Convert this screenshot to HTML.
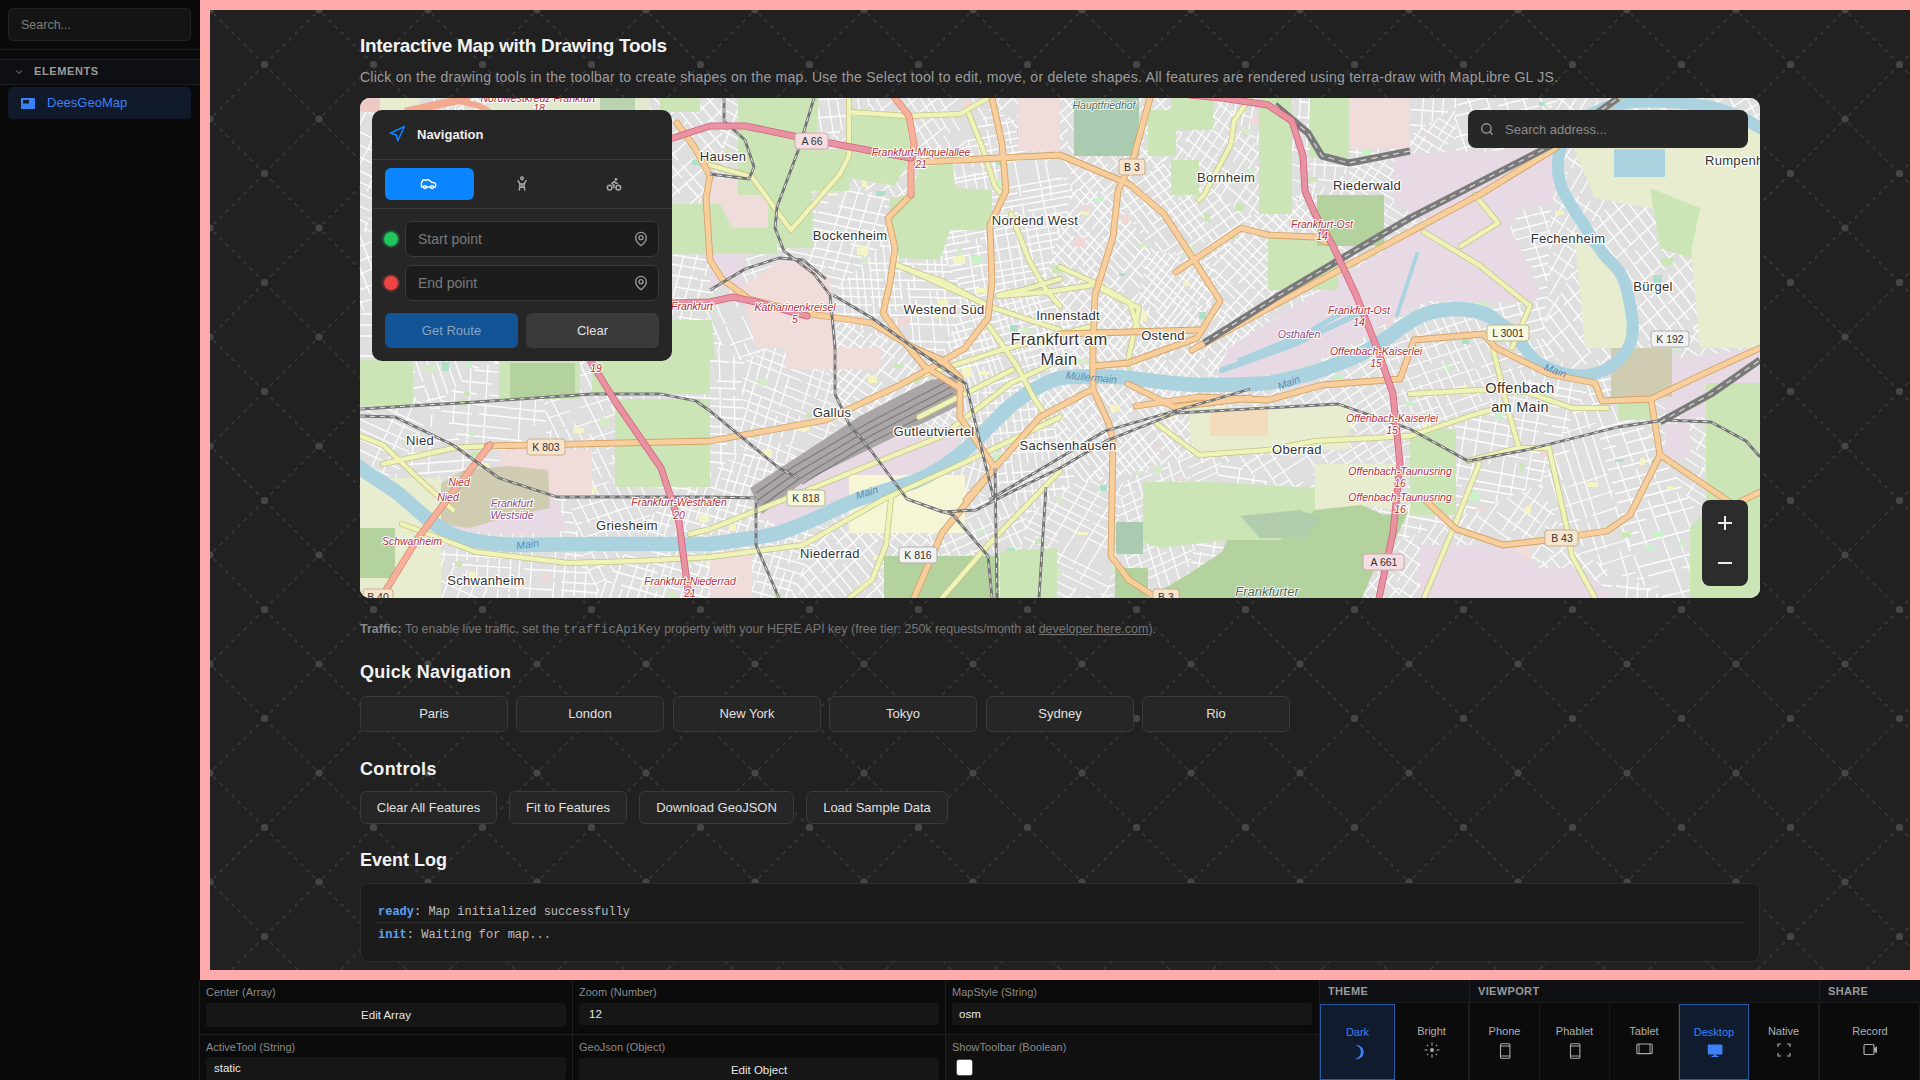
<!DOCTYPE html>
<html><head><meta charset="utf-8">
<style>
*{box-sizing:border-box;margin:0;padding:0}
html,body{width:1920px;height:1080px;overflow:hidden;background:#0a0a0a;font-family:"Liberation Sans",sans-serif}
.abs{position:absolute}
#sidebar{position:absolute;left:0;top:0;width:200px;height:1080px;background:#0a0a0a}
#sbsearch{position:absolute;left:8px;top:8px;width:183px;height:33px;border:1px solid #232323;border-radius:5px;background:#141414;color:#7d7d7d;font-size:12.5px;padding-left:12px;line-height:33px}
#sbline1{position:absolute;left:0;top:49px;width:200px;height:1px;background:#1c1c1c}
#sbhead{position:absolute;left:0;top:59px;width:200px;height:26px;background:#0e0f12;border-top:1px solid #1c1c1c;border-bottom:1px solid #1c1c1c}
#sbhead span{position:absolute;left:34px;top:5px;font-size:11px;font-weight:bold;letter-spacing:0.6px;color:#9a9a9a}
#sbitem{position:absolute;left:8px;top:87px;width:183px;height:32px;border-radius:5px;background:#111a2b}
#sbitem span{position:absolute;left:39px;top:8px;font-size:13px;color:#3b82f6}
#frame{position:absolute;left:200px;top:0;width:1720px;height:980px;background:#ffabab}
#stage{position:absolute;left:210px;top:10px;width:1700px;height:960px;background:#212121;overflow:hidden}
#bgsvg{position:absolute;left:0;top:0}
.h{position:absolute;left:360px;color:#f2f2f2;font-weight:bold;white-space:nowrap}
.qbtn{position:absolute;top:696px;height:36px;width:148px;border:1px solid #3a3a3a;border-radius:6px;background:#262626;color:#e0e0e0;font-size:13px;text-align:center;line-height:34px}
.cbtn{position:absolute;top:791px;height:33px;border:1px solid #3a3a3a;border-radius:6px;background:#262626;color:#e0e0e0;font-size:13px;text-align:center;line-height:31px}
#log{position:absolute;left:360px;top:883px;width:1400px;height:79px;border:1px solid #2c2c2c;border-radius:8px;background:#1b1b1b}
.logl{position:absolute;left:17px;font-family:"Liberation Mono",monospace;font-size:12px;color:#bdbdbd;white-space:nowrap}
.logl b{color:#5aa2f5}
#bottom{position:absolute;left:200px;top:980px;width:1720px;height:100px;background:#0b0b0b}
.cell{position:absolute;height:50px}
.lbl{position:absolute;left:6px;font-size:11px;color:#8a8a8a;white-space:nowrap}
.inp{position:absolute;left:6px;right:7px;height:24px;background:#161616;border-radius:3px;color:#e6e6e6;font-size:11.5px;line-height:24px}
.vbtn{position:absolute;top:24px;height:76px;color:#b0b0b0;font-size:11px;border-right:1px solid #1a1a1a;background:#0b0b0b}
.vbtn span{position:absolute;left:0;right:0;top:21px;text-align:center}
.vbtn.sel{background:#111b2e;border:1px solid #2a5ba6;color:#3b82f6}
.sechead{position:absolute;top:984px;font-size:11px;font-weight:bold;letter-spacing:0.35px;color:#9a9a9a}
</style></head>
<body>
<div id="sidebar">
  <div id="sbsearch">Search...</div>
  <div id="sbline1"></div>
  <div id="sbhead"><svg class="abs" style="left:14px;top:8px" width="10" height="8" viewBox="0 0 10 8"><path d="M2 2.5 L5 5.5 L8 2.5" fill="none" stroke="#555" stroke-width="1.2"/></svg><span>ELEMENTS</span></div>
  <div id="sbitem"><svg class="abs" style="left:13px;top:11px" width="14" height="11" viewBox="0 0 14 11"><rect x="0" y="0" width="14" height="11" rx="1" fill="#3b82f6"/><rect x="2" y="2" width="6" height="3.5" fill="#111a2b"/></svg><span>DeesGeoMap</span></div>
</div>
<div id="frame"></div>
<div id="stage">
  <svg id="bgsvg" width="1700" height="960">
    <defs>
      <pattern id="pt" x="0" y="0" width="109" height="109" patternUnits="userSpaceOnUse">
        <g stroke="#3d3d3d" stroke-width="1.3" stroke-dasharray="4 4.5" fill="none">
          <path d="M54.5 54.5 L0 0"/><path d="M54.5 54.5 L109 0"/><path d="M54.5 54.5 L0 109"/><path d="M54.5 54.5 L109 109"/>
        </g>
        <g fill="#464646"><circle cx="54.5" cy="54.5" r="3.6"/><circle cx="0" cy="0" r="3.6"/><circle cx="109" cy="0" r="3.6"/><circle cx="0" cy="109" r="3.6"/><circle cx="109" cy="109" r="3.6"/></g>
      </pattern>
    </defs>
    <rect width="1700" height="960" fill="url(#pt)"/>
  </svg>
</div>

<div class="h" style="top:36px;font-size:19px;line-height:19px;letter-spacing:-0.28px">Interactive Map with Drawing Tools</div>
<div class="abs" style="left:360px;top:70px;font-size:14px;line-height:14px;color:#9c9c9c;white-space:nowrap;letter-spacing:0.26px">Click on the drawing tools in the toolbar to create shapes on the map. Use the Select tool to edit, move, or delete shapes. All features are rendered using terra-draw with MapLibre GL JS.</div>

<div id="map" class="abs" style="left:360px;top:98px;width:1400px;height:500px;border-radius:10px;overflow:hidden;background:#e4e2df">
  <!--MAP--><svg width="1400" height="500" viewBox="0 0 1400 500" style="position:absolute;left:0;top:0;font-family:'Liberation Sans',sans-serif">
<rect width="1400" height="500" fill="#e0dfdf"/>
<path d="M405 12L466 46M470 48L474 50M361 -2L402 21M410 26L478 63M361 10L425 45M431 48L473 72M473 72L481 77M420 54L476 85M362 32L395 50M402 53L466 89M363 44L430 82M437 86L454 95M363 55L395 73M364 67L432 105M403 99L421 109M378 98L408 115M480 70L474 86M473 44L457 85M454 91L453 95M457 34L440 79M437 86L430 106M442 28L421 84M421 84L410 114M427 21L414 55M411 63L392 112M412 15L385 86M382 92L380 100M397 8L375 65M371 76L367 87M382 1L363 50M366 -5L361 8M955 84L952 99M948 60L940 103M938 22L926 85M932 3L921 60M921 62L919 76M924 -5L914 48M914 52L911 66M907 -5L902 22M901 25L897 47M896 -5L888 36M888 -5L881 28M878 -5L874 18M869 -5L867 8M861 -5L860 0M948 102L936 98M956 89L920 77M951 72L904 57M947 56L908 43M900 41L889 37M942 37L912 27M907 25L871 13M867 -2L857 -5M933 5L903 -5M741 94L766 119M730 93L790 155M719 91L754 127M758 132L785 159M785 159L788 162M712 94L730 113M732 115L776 161M782 167L786 171M742 138L783 180M706 113L764 173M770 179L780 190M704 120L759 177M701 129L729 158M730 159L764 194M771 201L776 206M699 137L738 178M745 185L773 215M696 146L717 167M719 169L739 190M746 197L769 221M694 154L729 189M734 195L764 226M692 161L716 186M722 192L753 224M753 224L760 232M689 171L737 220M741 225L755 239M720 215L739 234M745 241L750 245M691 193L743 247M771 218L746 247M778 196L737 245M758 205L726 243M790 155L732 224M729 227L720 238M787 146L736 207M729 215L715 231M743 184L710 223M776 130L737 176M736 177L704 214M771 123L743 157M736 165L714 190M711 194L700 207M766 117L723 168M718 174L696 200M761 110L707 174M756 103L732 131M729 134L709 158M750 95L717 134M714 138L690 166M738 93L717 119M712 125L697 142M730 93L702 125M718 91L710 101M110 269L111 274M90 249L102 283M76 235L96 289M63 224L88 296M55 230L69 269M72 276L81 303M46 236L63 284M65 290L70 304M26 266L35 290M20 278L24 289M86 298L66 303M65 288L37 294M55 274L19 281M91 250L27 264M80 238L35 248M50 233L34 237M65 217L30 225M67 203L29 212M70 181L13 193M65 159L17 169M42 151L19 156M28 229L18 190M47 235L34 187M59 227L39 156M67 206L55 161M53 157L52 153M94 6L99 7M85 14L97 15M75 23L94 25M64 32L91 35M55 40L89 43M46 48L86 53M96 5L93 29M83 16L77 61M55 40L53 55M654 496L634 505M655 488L620 503M657 477L622 492M619 494L599 503M659 468L596 496M660 459L614 480M607 483L592 489M662 449L623 466M612 471L589 482M665 431L589 465M667 420L592 453M590 454L578 460M663 412L635 424M631 426L578 450M619 415L567 438M643 396L574 427M569 429L564 432M609 402L563 423M567 413L556 417M601 505L582 464M579 458L559 414M612 505L601 481M598 476L581 439M577 431L569 412M622 505L608 475M608 474L585 425M585 425L578 410M635 505L611 452M646 505L609 424M654 496L618 419M614 411L610 402M640 444L620 400M660 461L644 426M641 421L630 397M662 447L638 395M666 430L654 404M195 83L194 88M184 78L181 96M175 73L169 103M163 67L156 108M153 62L143 119M144 57L138 91M130 69L120 129M116 80L111 112M143 119L110 112M168 103L112 92M189 91L123 78M860 368L883 371M858 377L907 384M855 386L899 392M909 394L933 397M851 397L924 407M933 408L964 413M849 405L876 409M885 410L954 420M963 421L969 422M845 416L904 424M911 425L960 432M843 424L884 430M893 431L953 440M839 436L885 442M896 444L944 451M836 446L891 454M899 455L936 460M833 455L878 461M917 466L929 468M831 464L864 469M865 469L921 477M827 475L856 479M861 479L913 487M822 493L860 498M860 498L898 503M818 504L824 505M970 415L969 422M957 409L952 441M943 402L939 429M939 434L934 461M931 396L925 434M925 435L918 480M908 463L903 498M906 383L898 439M890 494L888 505M894 377L884 442M882 452L875 505M880 370L873 420M867 461L861 499M860 415L851 469M850 478L846 505M847 411L842 446M841 454L833 505M858 202L855 205M856 193L846 206M854 180L836 206M853 171L825 209M849 165L830 191M828 195L816 210M842 163L808 210M836 162L799 212M827 160L795 202M790 209L787 214M820 158L777 215M813 156L775 207M806 155L787 180M799 153L786 171M777 215L774 212M785 214L776 205M799 212L779 194M808 211L781 186M820 209L784 176M829 208L786 169M839 207L789 160M851 206L813 171M809 168L791 151M857 201L828 174M820 166L808 155M855 187L827 161M853 173L843 164M1405 12L1385 25M1405 1L1370 23M1368 24L1362 28M1394 -5L1357 19M1371 -5L1337 17M1351 -5L1326 11M1332 -5L1315 6M1312 -5L1303 1M1306 2L1302 -5M1328 12L1319 -5M1349 22L1335 -5M1369 27L1353 -5M1383 25L1367 -5M1399 23L1384 -5M1405 -1L1403 -5M1199 198L1185 222M1268 61L1232 123M1230 127L1190 197M1261 49L1235 94M1230 103L1209 141M1206 145L1188 178M1255 36L1221 95M1219 98L1197 138M1193 144L1189 151M1249 26L1208 97M1208 98L1190 129M1243 14L1211 70M1206 78L1191 104M1238 3L1203 64M1199 71L1193 82M1230 -5L1214 22M1219 -5L1195 36M1207 -5L1196 13M1195 206L1187 200M1208 182L1188 168M1214 170L1193 155M1221 158L1190 136M1227 145L1206 130M1204 128L1191 119M1235 131L1192 100M1241 120L1192 85M1208 76L1193 66M1255 93L1230 76M1223 70L1194 50M1261 82L1221 54M1217 51L1195 35M1268 69L1213 30M1209 27L1196 17M1259 44L1208 8M1208 7L1197 -1M203 81L195 83M205 70L184 78M205 57L179 67M205 47L157 64M205 37L176 47M167 51L146 58M205 26L145 48M205 15L166 29M157 33L146 37M204 3L167 16M157 20L147 23M196 -5L161 8M159 9L148 12M167 -5L150 1M154 62L146 41M175 73L152 19M152 18L149 9M197 85L181 46M179 41L160 -5M205 60L189 22M188 19L178 -5M205 20L194 -5M481 383L469 423M474 373L462 411M444 469L441 477M448 430L438 462M434 473L424 505M461 361L451 391M451 394L441 425M440 427L428 466M425 474L417 498M427 439L410 491M407 501L406 505M445 360L421 434M419 442L408 474M408 475L399 505M435 359L422 399M422 401L409 442M407 445L397 480M395 483L388 505M428 358L403 438M402 440L385 494M384 496L382 505M417 358L392 439M390 442L370 505M410 357L384 442M381 451L366 496M366 496L363 505M401 357L376 437M374 444L364 476M361 485L354 505M394 356L374 418M373 421L361 457M359 466L346 505M385 356L363 425M360 433L352 460M351 464L338 505M376 357L351 437M347 447L335 487M332 497L329 505M363 366L355 390M353 395L336 451M333 459L319 505M351 375L336 422M340 382L322 439M322 439L301 505M330 389L318 429M318 429L308 459M307 461L299 486M297 493L293 505M316 399L295 467M294 469L283 505M307 406L292 454M290 461L276 505M294 415L283 449M280 460L265 505M262 491L257 505M264 457L248 505M246 483L239 505M254 505L238 500M325 505L261 487M253 485L246 483M366 505L326 494M321 492L253 473M402 505L371 496M360 493L303 477M298 475L259 464M428 503L385 491M382 490L343 479M337 477L264 457M433 493L396 483M391 481L333 465M327 463L284 451M281 450L271 447M437 486L391 473M388 472L329 455M326 454L275 440M441 476L413 468M408 467L380 459M375 458L305 438M303 437L282 431M446 467L400 454M393 452L316 430M310 428L288 422M451 458L378 437M367 434L335 425M335 425L296 414M456 448L396 431M387 428L309 406M460 440L407 425M404 424L355 410M351 409L316 399M465 431L413 416M409 415L376 406M336 394L327 392M418 408L391 401M385 399L336 385M474 412L418 396M410 394L361 380M478 404L448 395M443 394L384 377M374 374L358 370M483 395L397 370M390 369L368 362M482 383L406 362M405 362L383 356M473 371L430 359M283 276L285 280M254 240L280 292M281 294L286 305M245 248L268 294M269 296L288 333M238 254L264 307M267 313L289 356M228 262L249 303M251 307L267 339M267 340L290 385M221 268L243 313M278 383L291 409M212 276L248 348M252 357L286 425M230 336L252 381M254 384L274 424M276 429L279 435M214 325L242 380M244 386L267 430M267 431L273 443M188 295L205 329M206 331L218 356M220 359L236 391M236 392L255 430M256 431L267 453M186 314L207 357M209 361L248 439M253 449L260 462M198 362L230 426M235 435L253 472M212 416L229 451M230 452L246 483M225 466L239 493M247 481L234 486M261 461L229 472M276 440L223 457M291 417L259 428M259 428L219 441M291 402L226 423M223 424L215 427M251 400L211 412M289 371L253 382M249 384L223 392M215 395L207 397M288 353L249 366M241 369L203 381M288 337L246 351M237 354L199 366M287 323L214 346M204 350L196 352M286 306L216 329M286 289L219 310M210 313L188 320M282 274L232 290M221 294L190 304M189 304L184 306M273 261L201 284M265 248L237 257M935 105L952 121M927 107L957 136M919 110L956 144M910 112L934 135M937 138L952 152M904 114L949 157M895 117L935 155M937 156L946 165M888 122L910 143M919 151L941 173M884 128L911 153M911 153L938 179M878 134L927 181M929 183L934 187M874 140L906 170M869 146L926 200M865 150L922 205M860 157L895 191M897 193L917 212M914 220L917 222M853 171L899 214M905 220L914 228M855 182L875 201M876 203L910 235M857 197L906 244M862 212L903 250M872 231L899 257M882 250L896 264M905 247L889 263M935 186L904 218M897 225L879 244M950 156L929 178M926 181L882 227M878 231L874 235M957 135L900 194M899 195L869 226M953 123L924 153M920 157L892 186M891 187L864 216M949 112L928 134M921 141L879 185M944 104L889 161M888 162L857 195M925 108L873 162M871 164L855 182M905 114L874 146M871 150L853 168M805 60L794 70M818 34L767 81M766 82L755 92M826 18L807 35M799 42L772 67M770 69L743 94M835 -5L791 36M784 42L729 92M825 -5L782 34M775 40L755 59M748 66L720 91M812 -5L753 49M745 56L710 88M799 -5L738 51M737 52L711 76M707 80L704 82M787 -5L741 37M773 -5L731 34M761 -5L716 37M708 44L687 63M747 -5L715 24M708 31L680 56M733 -5L679 44M722 -5L677 36M676 37L669 44M708 -5L672 28M670 30L662 37M694 -5L656 30M683 -5L657 19M654 22L651 25M658 -5L639 13M645 -5L634 5M672 48L648 19M642 11L633 -0M729 92L688 43M682 35L649 -5M746 94L708 48M703 42L664 -5M761 89L718 37M713 31L684 -5M772 83L730 32M726 27L699 -5M784 76L730 10M722 1L717 -5M797 69L777 45M776 43L736 -5M806 58L768 12M764 7L754 -5M813 44L787 11M781 4L773 -5M820 29L792 -5M827 16L810 -5M833 3L827 -5M29 59L76 72M26 67L99 88M22 79L75 94M85 98L111 105M19 89L68 104M68 104L110 116M15 100L78 119M81 120L106 127M12 109L83 130M87 131L96 134M8 120L85 142M4 131L72 151M104 76L96 134M93 69L82 144M79 62L67 150M67 59L62 93M62 94L56 130M54 56L41 143M41 146L40 150M42 53L36 92M32 123L29 147M29 60L21 112M20 121L17 143M7 124L5 134M1030 235L987 252M1039 222L982 243M975 246L916 269M1037 213L995 229M984 233L937 251M1029 205L983 223M981 224L951 236M942 239L900 255M1022 199L960 223M956 224L906 244M1014 191L960 212M948 216L913 229M1007 185L941 210M935 212L919 219M999 177L943 199M991 170L936 191M984 163L937 181M977 156L943 170M968 148L950 155M962 142L956 144M902 272L898 260M914 269L906 244M925 267L915 233M936 264L921 217M948 261L940 234M937 226L929 198M960 258L951 229M948 219L937 183M971 256L957 209M955 204L944 168M982 253L963 189M961 185L951 153M993 251L967 166M966 162L959 140M1006 247L992 200M990 194L979 158M1017 245L1001 192M998 183L995 173M1028 239L1012 189M1036 226L1030 206M458 222L463 224M446 228L465 236M436 234L466 246M425 240L468 256M443 256L469 266M405 251L462 274M466 275L470 277M395 257L470 286M386 262L442 283M447 285L473 295M425 288L451 298M457 301L474 307M383 280L454 308M462 311L475 316M382 291L432 311M433 311L477 328M381 301L409 311M411 312L476 337M381 309L445 334M448 335L473 345M380 320L416 334M426 347L459 359M379 336L437 359M379 347L403 357M477 332L476 337M474 309L463 347M463 348L459 360M471 283L462 314M468 259L455 301M465 233L442 311M440 318L431 347M430 350L428 358M456 223L448 249M429 313L421 340M420 345L416 358M443 230L431 272M429 279L420 309M417 318L406 357M431 237L422 267M422 268L404 328M403 332L396 356M417 245L404 289M401 299L385 353M405 251L396 282M395 284L379 339M393 258L382 297M687 177L629 188M619 189L603 192M689 170L614 183M614 183L599 186M691 164L627 175M617 177L596 181M663 160L613 169M610 170L591 173M695 149L662 155M602 166L589 168M698 141L615 156M608 157L584 161M700 134L669 139M622 148L581 155M702 126L620 141M610 143L577 149M704 119L629 133M626 133L573 143M706 114L619 130M616 130L570 138M708 106L668 113M658 115L589 128M585 128L566 132M711 98L633 112M632 112L566 124M712 92L634 106M634 106L578 116M577 116L559 119M708 86L662 94M658 95L579 109M576 110L555 114M703 80L636 92M635 93L566 105M606 92L565 99M632 78L572 89M646 71L576 84M682 58L622 69M676 51L646 56M641 57L589 67M670 45L622 54M614 56L595 59M664 39L636 44M628 46L601 50M659 33L607 43M650 24L617 29M644 17L623 21M638 11L629 12M560 122L558 109M574 145L566 98M588 167L580 123M594 145L586 100M586 99L582 76M616 196L609 155M607 144L597 91M596 83L592 63M626 194L616 140M615 132L601 59M600 55L600 52M636 193L628 151M628 151L614 74M613 69L608 41M645 191L634 131M632 123L623 72M623 71L615 31M656 189L644 120M643 115L627 31M627 27L625 18M666 187L651 107M637 32L633 8M677 185L662 106M661 99L652 49M651 46L646 20M686 182L673 114M693 156L681 90M681 89L673 49M699 137L694 108M692 99L685 61M712 93L711 89M1190 268L1218 273M1179 275L1227 284M1166 284L1223 294M1156 290L1213 300M1213 301L1220 302M1143 298L1200 309M1176 315L1210 322M1118 314L1188 327M1192 328L1207 330M1107 320L1179 334M1184 335L1203 338M1095 328L1155 339M1082 336L1152 350M1155 350L1180 355M1189 357L1194 358M1140 356L1167 361M1172 362L1190 365M1060 350L1091 356M1166 370L1186 374M1048 358L1079 364M1085 365L1123 372M1123 372L1182 383M1037 368L1090 378M1094 379L1166 392M1034 375L1073 382M1077 383L1102 388M1112 390L1153 397M1030 385L1059 391M1067 392L1135 405M1072 402L1103 408M1104 408L1119 411M1023 404L1093 417M1094 417L1101 419M1020 413L1085 425M1016 422L1067 432M1015 432L1050 439M1023 444L1033 446M1214 271L1202 340M1202 264L1196 299M1188 348L1181 384M1186 271L1181 302M1179 312L1165 393M1170 281L1157 358M1156 365L1150 399M1156 290L1146 349M1145 354L1141 379M1141 379L1136 404M1140 300L1129 366M1122 311L1109 390M1108 394L1104 417M1107 320L1092 408M1092 408L1090 423M1092 330L1082 388M1081 393L1075 429M1061 426L1059 435M1059 351L1050 403M1050 405L1044 441M1045 360L1038 403M1037 407L1032 438M1022 405L1017 436M337 262L369 264M372 264L384 265M310 270L345 273M357 283L382 284M286 285L327 288M339 289L376 291M286 296L359 301M362 301L381 302M336 307L381 310M287 315L331 318M332 318L358 319M360 319L380 321M287 324L330 327M332 327L363 329M368 329L380 330M288 332L373 337M288 341L367 346M327 353L377 356M289 360L323 362M335 363L365 365M289 369L318 371M290 380L324 382M327 382L339 383M290 388L328 391M290 399L315 400M291 407L304 408M374 257L374 290M374 298L375 330M375 335L375 357M359 255L360 284M360 290L361 367M344 259L345 333M345 343L346 378M327 265L328 324M328 326L329 390M314 269L315 354M315 363L316 393M299 274L301 363M301 365L301 391M301 397L301 410M731 383L755 395M757 396L761 398M714 386L760 409M705 392L741 410M747 412L758 418M698 397L733 414M735 415L757 426M688 403L729 423M733 425L756 436M682 407L752 442M673 413L722 437M729 441L754 453M667 422L698 437M666 429L698 444M664 439L742 477M689 460L713 471M716 473L749 489M661 456L733 491M740 495L748 499M659 465L716 493M726 498L740 505M657 475L713 502M656 482L692 500M698 503L703 505M654 492L681 505M653 499L665 505M750 487L739 505M758 420L720 482M716 489L706 505M763 385L741 421M740 422L713 466M747 381L711 442M710 443L680 492M676 499L672 505M728 383L687 451M706 391L683 429M678 438L658 470M679 409L665 432M1078 20L1096 31M1069 25L1096 41M1062 30L1088 46M1053 35L1096 61M1045 40L1069 55M1076 59L1096 71M1036 46L1096 82M1029 50L1090 86M1021 55L1048 71M1054 74L1083 92M1089 95L1097 100M1013 60L1058 87M1065 91L1089 105M1091 107L1097 110M1004 65L1076 108M1079 110L1097 121M997 69L1061 108M1068 113L1097 130M989 74L1050 112M1056 115L1083 131M980 80L1012 99M1018 102L1068 133M1075 137L1097 151M973 84L1016 110M1018 112L1077 147M1080 149L1097 159M1020 123L1076 157M1080 160L1097 170M955 96L1027 139M1032 142L1088 176M1088 176L1098 182M950 100L994 126M1004 132L1028 147M1036 152L1065 169M1065 170L1096 188M948 109L979 127M983 130L1023 154M1026 156L1097 199M1029 169L1085 203M957 135L1018 172M1053 193L1075 206M1025 185L1065 209M1010 187L1051 212M1098 190L1090 201M1098 175L1076 206M1097 156L1059 211M1097 140L1046 214M1097 124L1073 158M1071 162L1036 212M1097 110L1052 174M1046 183L1030 206M1096 91L1055 152M1050 158L1034 181M1031 187L1022 199M1096 76L1050 143M1048 146L1024 180M1022 184L1016 193M1096 63L1079 87M1078 89L1047 134M1041 142L1010 187M1059 96L1034 134M1030 139L1012 166M1006 174L1002 180M1096 27L1057 84M1003 162L995 173M1095 13L1078 39M1072 47L1029 110M1027 112L989 168M1078 20L1027 94M1062 30L1028 80M997 125L976 155M1039 44L1004 94M970 145L968 147M1020 56L970 127M964 137L961 141M1001 67L971 110M969 113L956 132M983 78L965 103M963 107L953 122M965 89L949 112M1405 89L1397 93M1405 76L1392 83M1405 67L1388 76M1405 55L1383 67M1405 44L1379 59M1397 23L1368 39M1374 27L1364 32M1405 105L1396 81M1392 73L1374 29M1405 75L1385 26M634 383L630 397M622 364L612 402M617 355L603 403M611 345L597 392M596 397L593 406M605 335L583 408M599 326L589 363M586 372L576 405M576 406L575 411M584 340L563 414M575 350L555 415M560 364L547 410M547 376L539 405M538 386L533 401M587 408L548 394M537 390L534 389M606 403L573 391M565 389L543 381M625 398L575 381M581 370L561 363M630 376L583 360M583 360L569 355M621 362L578 346M611 345L588 337M600 328L597 327M257 237L194 287M191 289L180 298M257 221L230 243M224 247L170 289M257 207L233 226M232 226L198 253M190 259L162 281M257 193L204 235M199 239L154 274M205 221L146 267M237 180L179 226M226 177L168 223M210 173L184 194M180 197L161 212M168 287L144 249M194 290L174 259M169 251L151 223M185 244L163 210M222 267L177 196M237 254L202 199M196 190L190 180M252 242L215 184M213 181L208 173M257 214L238 184M31 292L74 311M-5 296L64 328M-5 307L19 318M21 318L60 336M-5 319L54 346M-5 329L49 354M-5 339L45 362M-5 350L40 371M-5 362L30 378M-5 373L19 384M-5 385L8 391M56 299L46 323M45 325L18 385M44 296L11 371M9 374L1 392M-1 365L-5 373M-1 290L-5 300M1197 260L1198 263M1177 241L1190 268M1165 234L1183 273M1150 226L1175 278M1135 218L1156 264M1160 272L1166 283M1149 269L1158 289M1107 203L1120 231M1122 236L1142 277M1146 287L1150 294M1095 200L1131 276M1133 280L1142 299M1084 203L1113 264M1116 271L1128 297M1130 300L1132 305M1076 206L1091 238M1093 243L1122 304M1068 209L1085 244M1086 246L1099 274M1104 285L1118 314M1058 212L1080 258M1082 263L1097 294M1048 215L1072 266M1076 274L1100 325M1039 221L1073 292M1073 293L1091 331M1060 287L1083 336M1028 239L1040 265M1044 272L1064 315M1066 319L1076 340M1027 260L1038 283M1042 291L1067 346M1031 293L1058 351M1034 322L1045 344M1038 353L1042 362M1048 358L1039 361M1090 331L1037 349M1136 302L1101 314M1098 315L1036 336M1133 291L1086 307M1081 308L1034 324M1194 257L1157 270M1153 271L1110 285M1102 288L1033 311M1185 247L1121 269M1114 271L1048 293M1047 294L1032 299M1100 264L1062 276M1061 277L1030 287M1160 231L1119 245M1111 248L1032 274M1145 224L1095 240M1084 244L1049 256M1046 257L1027 263M1129 215L1050 241M1048 242L1026 250M1114 207L1063 224M1056 226L1030 235M1101 200L1076 208M1068 211L1039 221M1267 70L1287 96M1289 99L1321 141M1349 177L1373 209M1262 80L1279 102M1284 110L1310 144M1313 148L1364 214M1257 90L1296 142M1302 150L1339 199M1345 207L1354 219M1251 101L1305 172M1308 177L1332 208M1332 209L1344 225M1245 112L1271 147M1275 152L1329 222M1333 227L1335 230M1240 121L1289 187M1292 190L1326 235M1234 132L1287 201M1288 202L1317 240M1229 143L1277 206M1280 210L1307 246M1223 153L1264 207M1267 211L1297 251M1217 164L1265 227M1270 234L1286 255M1211 175L1253 230M1256 234L1277 262M1206 185L1231 219M1232 220L1268 267M1201 195L1237 243M1241 248L1259 272M1195 206L1231 255M1237 262L1248 277M1189 217L1226 266M1184 228L1204 254M1182 241L1194 257M1369 198L1333 231M1359 185L1339 203M1338 203L1316 223M1315 224L1289 248M1347 170L1308 206M1305 208L1242 265M1236 271L1227 279M1338 156L1290 200M1288 201L1236 248M1229 255L1212 270M1328 143L1273 192M1271 194L1219 241M1317 128L1274 167M1268 173L1213 223M1210 226L1186 248M1306 114L1268 149M1267 150L1204 207M1200 211L1185 224M1296 101L1239 153M1236 155L1208 181M1286 86L1257 113M1257 113L1233 134M1275 72L1257 89M1016 422L1007 428M1022 405L994 424M1028 392L996 413M991 416L984 421M1033 380L975 418M1039 363L987 397M985 398L963 412M1038 354L986 388M982 391L955 408M1037 343L1007 362M1000 367L974 384M965 390L945 403M1036 334L1010 351M1007 352L970 377M967 379L937 399M1034 324L1013 338M1012 339L953 377M943 384L928 394M1033 314L962 360M929 382L918 389M1032 302L985 333M981 336L912 381M1031 293L985 323M982 325L931 358M1030 285L975 321M966 326L920 357M917 359L891 375M1029 273L972 310M972 310L927 340M921 344L882 369M1027 264L964 306M958 309L893 352M1026 253L985 280M981 282L933 314M932 315L883 347M873 353L862 360M1023 244L984 269M976 274L934 302M931 304L904 321M899 324L859 351M998 249L962 273M904 311L870 333M976 255L923 289M922 290L871 323M947 262L925 276M924 277L879 306M925 267L899 283M897 285L885 293M898 273L892 277M869 364L859 350M893 376L865 336M918 389L894 354M894 353L872 322M943 402L910 354M905 347L878 308M912 332L885 293M966 385L922 321M921 320L892 277M1013 430L991 399M987 392L969 366M968 365L937 319M932 312L916 289M910 280L905 272M1019 414L978 354M975 350L940 299M1025 399L994 353M992 350L951 290M945 281L934 265M1031 384L999 338M997 334L953 271M1037 369L1015 337M1014 336L994 307M993 305L961 258M1037 347L1013 312M1013 312L983 268M983 268L974 255M1033 315L1011 282M1011 282L993 256M1030 288L1007 254M862 344L855 353M854 333L842 348M893 271L852 324M845 333L837 343M890 265L862 301M858 307L833 338M887 259L866 285M884 254L837 314M836 316L825 330M881 248L865 268M862 272L821 325M877 241L839 291M836 294L816 320M875 236L846 272M839 281L815 311M815 312L812 316M821 292L807 311M868 224L842 257M842 258L805 305M865 218L846 243M840 250L800 301M861 211L806 281M806 281L794 297M808 269L790 292M850 206L810 257M806 262L786 288M842 207L786 277M833 208L798 252M825 209L774 273M817 210L776 263M774 265L769 271M807 211L767 262M789 213L758 253M781 214L752 252M773 215L763 228M851 353L813 317M825 315L796 288M788 280L750 245M864 339L816 294M807 286L774 254M766 247L756 237M868 330L823 288M821 286L777 244M770 237L762 230M872 321L848 299M842 292L809 262M806 259L767 223M876 313L853 291M845 284L819 260M812 254L790 232M789 232L772 216M880 304L841 266M838 264L808 236M802 230L785 214M884 295L848 261M845 259L796 212M888 286L829 230M893 276L848 234M845 232L822 209M885 255L859 231M850 222L835 208M870 228L847 206M1237 464L1247 478M1209 447L1237 483M1200 451L1229 487M1190 458L1214 488M1182 463L1205 493M1174 469L1200 501M1155 482L1174 505M1147 487L1161 505M1138 493L1148 505M1129 500L1133 505M1247 471L1227 488M1233 462L1201 487M1197 491L1180 505M1221 455L1168 498M1165 501L1160 505M1208 447L1161 485M1159 487L1137 504M703 351L709 390M695 331L701 377M703 387L704 393M680 296L690 367M691 370L695 398M672 288L683 362M684 371L689 402M665 289L677 370M678 377L683 407M657 290L668 365M670 374L675 411M649 291L658 346M658 349L668 416M641 292L652 364M652 366L658 408M634 293L641 337M641 339L648 386M649 393L650 401M625 294L630 328M631 331L639 389M617 295L623 338M625 346L629 374M609 296L613 321M614 325L619 358M604 296L611 346M672 413L665 414M709 390L653 394M651 394L642 395M714 378L635 385M711 370L651 375M647 375L630 377M652 364L624 366M703 351L668 354M666 354L619 358M698 339L665 342M694 331L607 338M690 320L652 323M641 324L608 326M686 310L622 315M611 316L599 317M682 301L613 307M678 291L622 295M618 295L598 297M121 380L117 380M116 371L52 376M111 362L42 367M105 351L48 356M99 341L55 345M80 310L75 310M51 376L53 348M68 377L71 335M71 329L72 316M102 379L104 350M1041 502L1038 505M1038 490L1025 505M1034 476L1013 501M1012 502L1009 505M1031 465L996 505M1028 454L983 505M1023 444L982 491M979 495L970 505M1018 437L984 474M981 478L957 505M1010 429L976 467M972 472L943 505M999 426L942 490M938 494L929 505M989 422L962 453M956 459L916 505M980 419L929 477M922 485L904 505M923 505L909 491M940 505L917 482M958 505L926 472M976 505L934 462M1013 505L991 482M985 477L952 442M1029 505L987 461M1040 497L996 452M990 445L968 423M1032 468L1007 442M1006 441L987 422M1184 230L1166 235M1185 220L1154 228M1186 209L1140 221M1187 199L1158 206M1156 207L1127 214M1187 189L1145 199M1141 200L1114 207M1188 176L1122 193M1122 193L1098 199M1188 165L1127 181M1124 182L1098 188M1189 157L1103 178M1189 146L1124 162M1114 165L1097 169M1190 133L1104 155M1190 123L1149 134M1138 137L1111 144M1107 145L1097 147M1191 113L1156 121M1149 123L1097 136M1192 102L1156 111M1150 113L1097 126M1192 89L1138 103M1129 105L1103 112M1102 112L1097 114M1193 80L1115 100M1114 100L1097 104M1193 70L1127 86M1126 87L1096 94M1194 58L1135 73M1130 74L1096 83M1107 68L1096 71M1195 37L1155 47M1144 50L1100 61M1195 26L1127 44M1117 46L1096 52M1196 14L1128 31M1124 32L1096 39M1197 3L1151 15M1187 -5L1138 8M1129 10L1095 18M1143 -5L1097 7M1108 -5L1103 -4M1122 211L1100 146M1146 224L1119 143M1119 143L1106 104M1105 103L1096 76M1168 236L1141 156M1140 152L1122 99M1118 88L1095 19M1184 229L1166 175M1165 171L1139 93M1137 88L1118 29M1116 23L1106 -5M1187 183L1169 129M1169 128L1154 83M1133 20L1125 -5M1190 136L1175 93M1161 50L1143 -5M1174 32L1161 -5M1195 44L1180 -1M587 286L593 291M580 289L598 305M572 293L599 315M564 296L599 325M556 300L593 331M550 302L583 330M542 305L562 322M565 324L584 340M534 309L579 346M527 312L574 351M520 315L566 354M510 319L535 340M505 321L558 366M488 329L520 356M482 332L530 372M536 377L542 382M476 336L530 381M470 351L503 379M512 386L525 397M467 358L514 397M477 378L495 392M599 320L589 335M598 302L561 363M594 292L560 347M560 347L534 389M586 287L566 319M561 326L545 354M542 358L518 397M573 292L554 322M550 329L526 369M525 371L508 397M557 299L540 326M536 333L510 375M506 381L498 393M543 305L509 360M507 362L490 391M527 312L494 364M493 366L482 384M513 318L477 377M499 324L471 369M485 330L466 361M1 216L19 216M-5 227L27 227M-5 238L35 238M-5 258L30 258M-5 269L25 270M33 236L35 249M23 262L24 270M-5 226L1 278M3 286L3 290M252 54L206 78M264 25L229 44M225 46L205 57M269 13L205 48M276 -3L210 33M260 -5L205 25M239 -5L205 14M219 -5L204 3M207 78L205 75M221 76L205 38M234 73L204 2M247 67L230 28M230 27L217 -5M255 47L233 -5M262 29L248 -5M270 11L263 -5M22 383L49 384M57 385L114 389M117 389L132 390M4 393L87 398M93 398L145 402M16 403L85 407M92 408L142 411M142 411L157 412M27 412L102 417M106 417L144 419M154 420L167 421M40 423L103 427M105 427L155 430M165 431L180 432M54 435L121 439M131 440L193 444M66 444L106 447M163 450L193 452M79 456L143 460M153 461L193 463M92 466L152 470M164 471L228 475M201 484L234 486M116 487L192 492M201 492L238 495M237 491L236 505M226 473L224 505M216 464L214 498M206 455L202 505M196 446L194 480M194 484L192 505M174 427L169 505M163 417L159 477M159 477L157 505M154 409L149 494M149 497L148 505M143 400L138 488M138 491L137 504M132 390L128 461M128 462L126 495M123 381L117 464M117 467L116 487M112 380L107 462M107 472L106 479M99 430L96 470M89 378L85 442M84 452L84 460M79 378L75 440M75 446L75 452M56 376L54 406M54 411L53 434M36 376L34 407M34 414L33 417M23 382L22 407M191 90L198 91M182 95L199 100M168 104L200 113M159 109L200 120M145 118L203 134M195 141L204 144M124 131L188 149M150 147L207 163M182 168L203 174M205 149L201 174M199 101L189 172M185 93L176 155M172 101L164 156M158 110L152 149M145 118L141 142M128 128L128 133M531 400L560 424M513 398L548 428M555 433L572 447M513 410L561 450M563 452L581 467M515 422L580 477M589 484L591 487M517 435L583 491M583 491L599 505M569 491L586 505M521 462L572 505M523 475L559 505M525 487L546 505M527 502L530 505M597 498L591 505M591 486L572 505M585 475L555 505M580 464L540 505M574 452L535 492M568 441L524 485M562 428L541 450M539 451L522 469M556 417L524 449M546 409L517 438M536 403L515 424M70 182L95 189M68 193L101 202M110 204L125 208M67 202L115 216M116 216L149 225M66 214L131 232M141 234L147 236M65 223L136 243M79 238L143 255M93 252L138 264M107 267L119 270M146 222L135 262M117 203L102 260M76 226L75 233M72 174L70 182M825 483L798 494M790 498L774 505M831 461L760 493M753 496L748 498M835 451L761 484M757 485L749 489M807 454L761 474M755 477L751 479M842 427L803 445M797 447L766 461M760 463L752 467M814 431L753 457M848 407L780 437M776 439L755 449M852 395L818 410M812 413L768 432M768 432L756 437M855 386L806 407M800 410L761 427M858 374L818 392M812 394L758 418M861 365L832 378M830 379L796 394M792 395L759 410M859 356L828 370M821 373L784 390M776 393L761 400M846 352L818 364M808 369L763 389M770 505L754 452M780 505L757 430M793 505L777 454M777 452L761 400M805 505L787 445M786 442L768 382M815 505L795 441M794 437L786 408M784 402L776 375M822 490L800 416M798 409L790 383M787 375L786 372M829 469L814 421M813 416L798 368M834 451L821 406M820 404L808 364M840 432L823 374M822 374L818 361M845 416L838 391M843 365L839 354M858 376L851 353M1206 443L1202 450M1197 423L1160 478M1192 412L1161 457M1156 465L1135 496M1188 403L1173 424M1173 425L1128 491M1122 500L1119 505M1182 391L1153 433M1150 439L1105 505M1171 390L1142 433M1097 499L1093 505M1117 454L1096 485M1091 493L1083 505M1139 403L1106 452M1103 456L1078 493M1075 497L1070 505M1121 410L1094 451M1107 416L1085 448M1080 456L1047 505M1089 423L1068 453M1062 462L1040 495M1074 429L1041 478M1040 479L1037 484M1055 437L1033 470M1040 443L1029 459M1059 505L1038 490M1083 505L1035 470M1111 505L1039 452M1127 501L1057 449M1057 449L1045 441M1140 492L1114 472M1113 472L1068 439M1155 482L1084 430M1168 473L1139 452M1137 450L1106 428M1103 425L1096 420M1180 464L1116 417M1194 455L1137 414M1206 444L1185 428M1180 425L1147 400M1194 417L1162 394M1182 390L1178 387M460 200L463 209M436 219L441 231M387 160L416 223M418 228L424 241M380 168L413 241M373 175L399 231M366 182L378 209M382 218L394 243M398 252L399 255M384 245L391 259M352 197L365 226M366 229L381 262M343 205L362 247M405 251L378 260M464 216L412 233M402 236L370 247M448 187L405 201M439 177L354 204M348 206L340 209M427 163L364 184M417 152L386 162M485 391L516 430M481 399L517 444M476 409L519 463M471 418L520 477M520 478L524 483M466 428L516 488M516 489L527 502M461 438L478 460M483 466L505 493M510 499L515 505M456 448L497 499M452 456L492 505M446 467L478 505M442 476L466 505M437 486L452 505M432 495L440 505M526 496L517 505M524 483L501 505M522 468L486 501M518 441L461 494M458 496L449 505M515 424L461 475M457 478L439 496M436 498L429 505M513 411L476 446M470 452L440 479M510 397L456 448M1270 -5L1325 22M1243 -5L1288 17M1289 17L1358 51M1366 55L1380 62M1240 8L1292 33M1294 34L1333 53M1342 57L1391 82M1247 22L1297 47M1305 51L1370 82M1372 83L1397 95M1332 76L1384 102M1394 107L1405 112M1266 58L1291 70M1295 72L1337 93M1340 94L1380 114M1390 119L1405 126M1279 77L1345 109M1388 130L1405 139M1347 123L1405 152M1307 116L1388 155M1395 158L1405 163M1324 138L1386 168M1391 171L1405 178M1337 156L1405 189M1353 177L1380 191M1387 194L1405 203M1405 185L1393 208M1405 159L1393 182M1388 191L1379 208M1405 130L1392 154M1389 161L1369 199M1404 105L1362 184M1396 90L1381 118M1379 122L1351 175M1389 77L1364 125M1362 129L1343 164M1380 62L1357 107M1352 115L1334 151M1373 49L1355 82M1355 82L1338 116M1336 119L1325 140M1355 25L1343 49M1339 56L1308 116M1344 20L1314 77M1332 14L1291 91M1320 9L1295 58M1294 59L1282 82M1309 3L1274 70M1296 -3L1265 56M1283 -5L1262 35M1262 36L1258 42M1252 -5L1243 13M1239 -5L1236 1M290 127L253 180M282 117L246 169M243 173L238 180M276 109L228 178M268 100L224 162M220 167L215 174M262 93L229 139M223 149L208 170M255 84L212 144M211 146L206 154M247 74L203 137M207 112L201 120M202 81L197 88M219 175L207 167M254 184L205 148M266 177L235 154M233 153L203 131M272 166L224 131M217 126L201 114M277 156L218 113M284 144L213 92M291 132L222 82M270 102L231 74M360 244L358 255M347 220L340 259M333 206L322 267M324 203L313 261M313 265L311 270M315 199L306 249M306 249L301 273M307 196L300 236M293 273L292 276M299 193L284 272M290 190L276 265M282 187L269 255M273 184L264 233M264 181L257 221M300 274L280 271M325 265L272 259M352 257L280 249M279 249L264 247M362 246L299 239M299 239L258 234M356 236L300 230M293 229L257 225M348 223L318 219M341 210L301 206M301 206L257 201M305 196L257 190M889 116L891 119M874 107L887 124M857 97L882 130M835 85L875 138M868 137L872 142M803 66L848 125M852 131L866 149M797 69L812 89M819 99L859 151M790 73L844 144M848 148L857 160M783 77L832 141M830 152L838 162M769 84L798 122M763 88L809 148M814 154L816 157M755 92L789 136M795 144L803 154M870 145L843 164M891 117L830 161M881 111L817 157M871 105L829 136M820 142L804 154M862 100L815 134M852 94L785 142M843 89L792 127M784 132L780 135M833 83L787 117M777 124L773 126M824 78L770 117M815 73L762 111M804 67L765 95M761 98L755 102M756 91L751 95M12 139L19 157M-2 133L15 178M-5 157L10 196M-5 191L4 213M11 201L-5 207M14 186L-5 194M17 169L-5 178M19 155L-5 165M16 142L-5 150M587 282L581 289M584 271L562 297M581 263L547 303M576 258L532 310M567 255L514 318M560 252L535 282M529 289L505 317M502 320L499 324M552 249L528 278M522 284L497 314M543 246L510 285M536 243L512 272M509 275L475 315M528 240L478 299M520 238L494 269M493 270L472 294M512 235L493 258M487 265L471 283M504 232L470 272M495 228L468 260M488 226L467 251M481 223L466 241M473 220L464 231M489 328L476 319M498 324L474 308M509 320L473 295M519 316L493 298M491 297L471 284M528 311L470 272M538 307L468 260M559 298L515 268M507 263L465 235M521 263L477 233M579 289L544 266M535 260L510 243M504 239L481 223M528 244L516 236M584 272L562 257M555 252L549 248M1395 208L1405 214M1376 208L1405 226M1366 213L1405 238M1355 219L1382 236M1397 258L1405 263M1334 231L1403 275M1326 235L1359 256M1360 257L1405 286M1314 242L1380 285M1329 264L1357 282M1359 283L1405 313M1293 253L1368 302M1378 308L1405 326M1282 259L1341 297M1345 300L1404 338M1273 264L1302 283M1303 283L1363 323M1373 329L1400 346M1263 269L1318 305M1325 309L1356 329M1364 335L1405 361M1251 276L1275 292M1280 295L1325 324M1326 324L1393 368M1396 369L1405 375M1263 296L1326 336M1329 338L1354 355M1359 358L1405 388M1277 318L1329 351M1330 352L1388 389M1397 395L1405 401M1288 336L1339 369M1341 370L1380 395M1387 400L1405 411M1301 357L1372 403M1315 379L1361 409M1370 414L1396 431M1399 433L1405 437M1326 397L1389 437M1341 420L1405 462M1353 439L1405 473M1368 463L1405 487M1380 482L1405 499M1392 501L1397 505M1405 472L1389 498M1405 412L1371 468M1405 385L1363 454M1405 356L1372 410M1369 414L1353 440M1405 326L1362 396M1362 396L1344 425M1405 299L1384 332M1382 337L1348 391M1405 270L1378 314M1374 321L1351 358M1348 363L1327 398M1405 240L1390 264M1386 270L1365 304M1362 310L1336 352M1405 211L1373 262M1369 269L1326 339M1326 339L1308 368M1388 208L1362 251M1324 312L1299 352M1369 211L1329 276M1325 283L1301 322M1299 325L1290 339M1341 227L1297 299M1296 299L1281 324M1315 241L1287 287M1285 289L1272 310M1261 271L1254 282M832 337L844 352M778 280L824 339M825 340L836 355M746 247L787 300M791 306L831 357M734 245L760 278M762 281L800 329M802 333L823 359M726 243L759 287M766 295L796 333M797 335L817 361M719 246L772 314M713 251L751 300M752 301L801 364M709 255L755 314M758 317L797 368M704 261L747 316M754 325L789 371M723 295L762 345M768 353L783 373M694 270L724 308M731 316L762 357M762 357L777 375M691 273L710 298M717 307L734 329M737 334L771 377M685 279L739 349M742 352L761 377M680 284L728 346M728 346L755 380M678 293L711 334M715 339L744 377M687 313L729 367M734 373L741 382M697 336L732 382M708 362L724 383M837 343L818 361M832 337L800 367M825 330L801 352M799 354L777 375M817 321L767 369M766 370L755 380M810 314L748 373M743 379L739 382M804 308L753 357M748 362L725 384M790 293L749 332M746 335L711 369M783 286L752 315M750 317L706 359M776 278L746 306M738 314L702 348M769 271L716 321M708 329L698 338M762 263L741 283M735 290L702 321M697 325L694 329M755 256L727 283M723 287L689 319M749 248L685 309M737 245L703 278M699 281L681 298M725 243L677 289M1096 -5L1095 10M1084 -5L1082 18M1074 -5L1072 24M1064 -5L1061 31M1044 -5L1040 43M1032 -5L1029 36M1029 39L1028 50M1022 -5L1020 22M1020 28L1018 57M1012 -5L1009 31M1009 34L1007 63M1002 -5L998 44M998 46L996 70M989 35L985 76M981 -5L976 60M976 68L974 83M970 -5L964 79M960 -5L956 42M956 45L954 80M950 -5L948 21M948 26L946 52M941 -5L939 21M975 83L954 81M997 69L950 66M1019 56L955 51M953 51L946 51M1044 41L991 37M988 37L954 34M950 34L941 33M1065 28L991 23M989 23L937 19M1088 14L1027 10M1026 10L941 4M1102 -1L1049 -5M1391 499L1368 505M1384 489L1344 500M1342 500L1323 505M1378 480L1318 495M1317 495L1302 499M1298 488L1289 491M1365 459L1322 470M1315 471L1288 478M1284 480L1277 481M1359 449L1279 469M1346 428L1287 443M1285 444L1269 448M1279 434L1266 437M1334 409L1295 419M1286 421L1263 427M1328 400L1271 415M1269 415L1260 417M1321 389L1257 405M1316 380L1289 387M1285 388L1255 396M1309 370L1252 385M1302 359L1262 369M1260 369L1248 372M1297 350L1246 363M1290 339L1266 345M1256 348L1243 351M1284 330L1240 341M1278 321L1237 331M1265 299L1231 307M1259 289L1228 297M1253 280L1226 286M1285 488L1274 457M1270 447L1265 433M1287 447L1263 382M1263 381L1250 347M1249 345L1227 286M1326 505L1309 459M1309 459L1288 402M1285 396L1276 371M1273 364L1252 308M1249 298L1241 278M1342 505L1325 459M1324 455L1297 383M1296 381L1277 330M1273 319L1266 301M1358 505L1347 476M1345 469L1317 394M1373 505L1350 442M1347 434L1342 422M1389 505L1382 486M1220 300L1230 331M1232 336L1252 399M1255 408L1270 453M1214 313L1237 383M1260 453L1268 480M1207 329L1234 413M1234 414L1246 451M1201 342L1227 421M1228 425L1237 453M1238 456L1242 468M1194 358L1202 382M1203 386L1223 448M1188 371L1213 450M1181 386L1182 390M1276 474L1262 478M1271 457L1240 467M1267 442L1222 455M1262 425L1236 433M1228 436L1206 442M1258 409L1231 418M1220 421L1199 427M1254 393L1192 412M1249 376L1208 389M1200 374L1184 379M1209 353L1194 357M1236 325L1204 335M1231 310L1213 315M1227 294L1223 295M599 185L601 210M581 157L589 239M572 142L577 185M577 193L581 229M564 128L569 185M570 193L575 247M575 248L576 258M556 114L559 155M568 250L569 256M549 120L552 160M553 167L555 193M556 201L561 253M543 126L547 174M548 182L554 250M535 134L542 203M529 140L536 213M536 220L539 244M523 146L527 188M528 196L532 240M515 153L521 217M522 225L523 239M509 159L515 221M515 225L516 236M502 166L508 224M496 172L500 215M501 224L502 231M489 179L494 228M482 186L486 225M470 198L472 220M584 252L557 251M587 244L535 243M595 227L544 226M542 226L486 225M598 218L530 217M525 217L475 216M473 216L464 216M602 208L518 207M512 207L463 206M606 200L549 199M543 199L510 199M507 199L471 198M603 192L546 191M541 191L478 190M598 183L528 182M523 182L487 181M592 174L549 173M543 173L510 172M588 167L555 166M554 166L503 165M583 159L552 158M577 149L520 148M572 141L532 140M566 132L537 132M560 122L547 122M134 265L145 266M114 272L156 276M102 283L131 286M141 287L171 290M91 293L117 296M129 297L171 301M177 301L183 302M81 303L107 306M112 306L178 313M178 313L186 313M82 313L112 316M119 316L186 323M89 325L151 331M186 334L191 335M96 336L162 343M172 344L194 346M103 348L146 352M158 353L186 356M190 357L197 357M110 360L154 364M187 368L200 369M160 377L203 381M125 383L198 390M139 396L172 399M178 400L206 402M153 409L212 415M166 420L214 425M179 431L217 435M207 456L223 458M222 469L226 470M217 433L215 463M204 384L202 418M201 427L200 450M191 332L188 374M188 385L186 416M176 294L174 328M162 281L157 365M145 267L143 303M138 380L137 394M128 267L123 350M123 355L121 380M111 274L107 341M107 342L106 354M95 290L93 324M9 7L62 7M63 7L93 8M14 17L62 17M63 17L81 17M20 29L68 29M25 40L55 40M31 52L42 52M102 -5L102 -2M87 -5L88 12M74 -5L75 23M46 -5L49 46M32 -5L34 52M20 -5L21 32M5 -5L5 -0M343 -5L362 17M330 -5L362 33M316 -5L363 50M304 -5L355 56M356 57L364 65M290 -5L344 58M346 60L364 82M277 -5L311 35M344 73L357 89M271 7L318 62M322 67L347 96M268 16L322 80M325 84L339 100M263 28L320 95M317 109L320 112M299 102L312 117M249 61L273 89M253 81L280 113M281 114L294 129M364 75L329 107M363 53L312 98M312 99L286 122M362 35L335 59M333 61L277 112M362 12L312 57M359 -5L337 15M328 23L294 54M290 58L269 76M262 83L258 87M334 -5L279 45M270 53L247 74M278 25L256 45M287 -5L270 11M519 -5L519 -2M507 -5L509 8M497 -5L500 16M486 -5L491 24M476 -5L482 32M467 -5L474 39M456 -5L462 36M446 -5L452 32M436 -5L440 23M424 -5L429 22M414 -5L418 17M405 -5L408 13M395 -5L397 8M385 -5L386 3M480 34L458 35M499 17L451 20M445 20L428 22M519 -2L436 3M433 4L393 6M-5 8L14 17M-5 32L28 47M-5 45L29 60M-5 57L25 71M-5 71L21 83M-5 82L18 92M-5 93L14 102M-5 106L10 113M-5 119L6 125M-5 132L-2 133M29 47L7 93M19 27L5 57M4 58L-5 77M9 7L-5 37M187 171L186 185M179 166L176 196M168 159L163 210M159 153L152 212M150 147L146 180M146 183L142 219M141 142L135 193M135 195L133 214M127 185L124 208M114 126L106 196M97 183L96 190M92 136L87 184M82 144L78 178M153 220L142 220M166 206L133 205M180 192L134 190M130 190L93 188M192 179L157 177M156 177L107 175M105 160L65 158M151 148L83 145M126 132L100 131M-5 395L18 406M-5 406L41 429M45 430L55 435M-5 417L37 438M44 441L78 457M-5 429L30 446M37 450L81 471M-5 441L67 476M69 477L127 505M-5 453L45 477M-5 462L20 474M-5 473L61 505M-5 496L13 505M125 494L121 505M115 486L107 505M105 478L95 505M94 468L80 505M84 460L70 498M69 501L67 505M76 453L64 485M60 493L56 505M65 443L46 493M44 497L41 505M54 435L33 492M32 495L28 505M45 427L31 466M30 469L16 505M34 418L22 450M22 452L6 492M4 498L2 505M24 410L2 470M0 473L-5 487M14 401L-5 450M4 392L-5 416M932 93L922 109M917 73L889 116M912 67L886 106M906 59L874 107M900 52L885 76M895 45L860 99M890 38L873 64M869 71L853 95M883 30L864 61M857 71L845 90M878 23L859 54M858 55L841 81M872 16L859 37M858 38L830 82M867 9L830 65M826 71L823 77M863 3L820 70M857 -4L826 44M823 50L810 70M848 -5L828 25M822 35L804 63M860 99L835 78M899 116L860 82M857 80L838 64M831 59L813 44M912 112L884 88M874 80L826 40M821 35L818 33M859 52L824 22M938 104L895 68M891 64L849 29M847 28L829 12M913 68L877 38M876 37L834 2M875 19L855 2M849 -2L846 -5M381 105L385 105M329 107L392 116M360 123L395 128M347 132L406 141M290 133L373 146M383 148L397 150M313 157L379 167M275 161L309 166M310 166L347 172M352 173L372 176M269 171L338 181M340 182L363 185M266 181L306 188M315 189L353 195M316 200L344 204M402 128L396 151M392 111L378 161M377 165L374 174M381 101L359 179M359 182L356 193M369 90L360 125M358 130L345 178M343 182L336 207M356 90L333 173M332 177L324 203M341 100L325 153M324 157L313 199M324 110L308 167M306 174L300 194M306 122L290 179M288 186L287 189M629 -5L633 2M609 -5L624 19M576 -5L600 33M565 -5L590 35M557 -5L581 33M584 38L596 58M545 -5L587 61M536 -5L582 69M539 21L576 81M516 1L556 64M557 67L572 90M510 6L530 38M530 39L554 77M555 78L566 97M555 94L561 104M496 19L533 79M534 80L550 107M489 25L514 64M514 65L539 105M522 96L524 99M476 38L508 90M474 50L488 71M489 73L498 89M574 86L547 108M606 43L537 99M581 47L538 80M535 83L518 96M586 28L561 48M556 52L534 70M529 74L506 92M605 -5L554 35M584 -5L526 41M520 46L481 77M563 -5L513 35M509 38L478 63M543 -5L508 22M500 29L474 49M1297 496L1296 505M1288 490L1287 505M1278 484L1277 505M1268 480L1266 505M1238 482L1236 505M1226 488L1225 505M1216 493L1215 505M1205 499L1205 505M1254 505L1229 502M1223 502L1203 500M1291 492L1256 488M1252 488L1231 486M716 233L720 244M703 212L716 248M690 191L711 253M691 217L705 259M673 186L700 264M668 187L678 215M679 216L696 268M662 188L681 243M681 243L692 273M656 189L666 218M649 190L671 254M673 259L681 283M642 192L671 276M636 193L661 263M664 274L670 288M630 194L645 238M649 248L663 289M617 196L637 254M637 255L650 291M610 197L640 282M642 288L643 292M606 200L634 281M623 269L631 293M599 216L622 283M623 285L626 294M595 226L604 253M608 264L619 295M592 233L613 295M588 243L598 274M598 274L606 296M584 251L600 297M677 287L674 288M684 280L635 293M695 269L617 290M707 257L649 273M717 247L664 261M720 239L650 257M641 260L585 274M717 234L679 244M670 246L602 264M591 267L583 269M713 227L642 246M634 248L589 260M585 261L581 262M708 220L633 239M631 240L593 250M704 214L621 235M619 236L587 245M700 207L655 219M648 220L623 227M613 230L591 236M695 200L669 207M667 208L595 227M692 194L667 201M663 202L623 213M615 215L598 219M646 191L605 202M144 55L109 79M145 43L100 74M147 29L91 67M148 15L113 39M106 43L85 58M150 1L120 21M115 25L89 42M140 -5L93 27M123 -5L97 12M102 75L88 47M121 76L109 53M108 51L94 24M132 67L100 4M144 55L114 -5M147 26L131 -5M150 -0L147 -5M481 83L489 85M467 89L504 96M507 97L534 103M524 108L554 115M442 100L468 105M479 108L504 113M504 113L547 122M425 107L456 114M458 114L524 128M527 129L538 131M412 113L500 132M502 132L531 138M399 119L476 135M402 128L451 138M490 146L517 152M406 139L440 146M451 149L508 161M415 150L491 166M493 166L501 168M424 160L466 169M468 169L493 175M434 171L486 182M443 181L479 189M454 194L470 198M546 108L539 130M535 103L520 148M524 99L502 166M511 94L490 160M488 167L481 187M500 89L473 173M489 85L465 159M464 162L454 194M458 138L443 182M445 99L425 161M431 105L416 151M414 112L406 138" stroke="#fdfdfd" stroke-width="1.3" fill="none"/>
<g><rect x="566" y="100" width="5" height="5" fill="#d6ecc6"/><rect x="121" y="365" width="8" height="8" fill="#f4f4c4"/><rect x="1314" y="245" width="7" height="7" fill="#c9f2c9"/><rect x="1110" y="394" width="10" height="9" fill="#c9f2c9"/><rect x="213" y="330" width="11" height="5" fill="#f4f4c4"/><rect x="740" y="387" width="7" height="6" fill="#aee0c8"/><rect x="781" y="213" width="6" height="10" fill="#f4f4c4"/><rect x="647" y="450" width="8" height="10" fill="#aee0c8"/><rect x="181" y="476" width="9" height="8" fill="#f0d8d6"/><rect x="834" y="491" width="11" height="8" fill="#f4f4c4"/><rect x="154" y="86" width="9" height="6" fill="#f0d8d6"/><rect x="885" y="71" width="9" height="6" fill="#c9f2c9"/><rect x="733" y="100" width="10" height="3" fill="#c9f2c9"/><rect x="620" y="273" width="10" height="4" fill="#f4f4c4"/><rect x="667" y="28" width="10" height="8" fill="#d6ecc6"/><rect x="1046" y="304" width="7" height="4" fill="#c9f2c9"/><rect x="414" y="496" width="7" height="9" fill="#cde6b8"/><rect x="447" y="250" width="5" height="5" fill="#d6ecc6"/><rect x="1151" y="93" width="4" height="5" fill="#cde6b8"/><rect x="1166" y="169" width="6" height="5" fill="#d6ecc6"/><rect x="559" y="207" width="6" height="4" fill="#f4f4c4"/><rect x="1292" y="361" width="7" height="6" fill="#aee0c8"/><rect x="1195" y="113" width="9" height="4" fill="#f4f4c4"/><rect x="1009" y="109" width="10" height="8" fill="#c9f2c9"/><rect x="537" y="219" width="12" height="9" fill="#f0d8d6"/><rect x="1349" y="128" width="8" height="9" fill="#d6ecc6"/><rect x="449" y="239" width="4" height="9" fill="#f0d8d6"/><rect x="1234" y="205" width="9" height="7" fill="#aee0c8"/><rect x="531" y="339" width="11" height="7" fill="#f4f4c4"/><rect x="616" y="190" width="11" height="5" fill="#f4f4c4"/><rect x="497" y="148" width="11" height="9" fill="#f4f4c4"/><rect x="240" y="320" width="9" height="8" fill="#d6ecc6"/><rect x="989" y="204" width="11" height="8" fill="#f4f4c4"/><rect x="157" y="266" width="3" height="5" fill="#f4f4c4"/><rect x="1370" y="495" width="8" height="9" fill="#c9f2c9"/><rect x="369" y="426" width="7" height="7" fill="#f4f4c4"/><rect x="868" y="316" width="10" height="8" fill="#c9f2c9"/><rect x="1035" y="500" width="10" height="4" fill="#f4f4c4"/><rect x="1346" y="208" width="6" height="7" fill="#f4f4c4"/><rect x="823" y="148" width="10" height="10" fill="#d6ecc6"/><rect x="553" y="395" width="5" height="5" fill="#c9f2c9"/><rect x="1262" y="434" width="9" height="6" fill="#cde6b8"/><rect x="1336" y="89" width="5" height="5" fill="#cde6b8"/><rect x="1182" y="350" width="5" height="9" fill="#f0d8d6"/><rect x="802" y="313" width="11" height="8" fill="#f4f4c4"/><rect x="744" y="499" width="8" height="4" fill="#d6ecc6"/><rect x="692" y="168" width="10" height="7" fill="#cde6b8"/><rect x="385" y="6" width="6" height="5" fill="#c9f2c9"/><rect x="823" y="24" width="3" height="5" fill="#c9f2c9"/><rect x="777" y="146" width="11" height="3" fill="#d6ecc6"/><rect x="585" y="403" width="4" height="4" fill="#aee0c8"/><rect x="920" y="35" width="11" height="8" fill="#c9f2c9"/><rect x="983" y="326" width="10" height="4" fill="#f4f4c4"/><rect x="159" y="63" width="4" height="7" fill="#f4f4c4"/><rect x="1063" y="323" width="4" height="9" fill="#f4f4c4"/><rect x="324" y="304" width="12" height="4" fill="#d6ecc6"/><rect x="74" y="171" width="9" height="4" fill="#c9f2c9"/><rect x="1034" y="73" width="9" height="7" fill="#f4f4c4"/><rect x="324" y="458" width="10" height="8" fill="#c9f2c9"/><rect x="793" y="367" width="8" height="9" fill="#d6ecc6"/><rect x="226" y="445" width="4" height="6" fill="#aee0c8"/><rect x="439" y="23" width="7" height="5" fill="#c9f2c9"/><rect x="186" y="6" width="6" height="7" fill="#aee0c8"/><rect x="173" y="214" width="4" height="5" fill="#cde6b8"/><rect x="957" y="423" width="9" height="9" fill="#f4f4c4"/><rect x="527" y="135" width="5" height="4" fill="#f4f4c4"/><rect x="26" y="432" width="6" height="6" fill="#cde6b8"/><rect x="1002" y="387" width="5" height="6" fill="#f4f4c4"/><rect x="297" y="324" width="4" height="7" fill="#f0d8d6"/><rect x="6" y="472" width="11" height="4" fill="#c9f2c9"/><rect x="881" y="31" width="11" height="4" fill="#d6ecc6"/><rect x="603" y="2" width="9" height="7" fill="#f0d8d6"/><rect x="104" y="294" width="6" height="4" fill="#cde6b8"/><rect x="127" y="251" width="5" height="7" fill="#c9f2c9"/><rect x="1002" y="50" width="9" height="9" fill="#c9f2c9"/><rect x="188" y="369" width="5" height="9" fill="#aee0c8"/><rect x="235" y="258" width="10" height="9" fill="#d6ecc6"/><rect x="761" y="117" width="8" height="8" fill="#f0d8d6"/><rect x="554" y="281" width="5" height="5" fill="#cde6b8"/><rect x="468" y="95" width="10" height="3" fill="#f4f4c4"/><rect x="611" y="158" width="11" height="8" fill="#c9f2c9"/><rect x="376" y="462" width="5" height="7" fill="#aee0c8"/><rect x="275" y="182" width="4" height="6" fill="#f4f4c4"/><rect x="427" y="130" width="7" height="10" fill="#f4f4c4"/><rect x="497" y="71" width="4" height="9" fill="#f4f4c4"/><rect x="502" y="159" width="6" height="7" fill="#d6ecc6"/><rect x="104" y="15" width="5" height="5" fill="#aee0c8"/><rect x="1065" y="35" width="3" height="4" fill="#f0d8d6"/><rect x="113" y="422" width="10" height="6" fill="#cde6b8"/><rect x="1227" y="384" width="11" height="5" fill="#f4f4c4"/><rect x="483" y="58" width="8" height="3" fill="#f4f4c4"/><rect x="308" y="163" width="4" height="9" fill="#cde6b8"/><rect x="875" y="106" width="9" height="7" fill="#cde6b8"/><rect x="1041" y="39" width="6" height="8" fill="#aee0c8"/><rect x="692" y="471" width="10" height="6" fill="#d6ecc6"/><rect x="1301" y="160" width="12" height="7" fill="#cde6b8"/><rect x="1292" y="433" width="11" height="6" fill="#c9f2c9"/><rect x="95" y="463" width="7" height="6" fill="#cde6b8"/><rect x="119" y="10" width="8" height="7" fill="#d6ecc6"/><rect x="574" y="212" width="9" height="7" fill="#f4f4c4"/><rect x="27" y="400" width="5" height="8" fill="#f4f4c4"/><rect x="18" y="215" width="11" height="5" fill="#d6ecc6"/><rect x="189" y="387" width="6" height="4" fill="#f0d8d6"/><rect x="147" y="421" width="10" height="6" fill="#f4f4c4"/><rect x="109" y="474" width="6" height="9" fill="#f4f4c4"/><rect x="222" y="137" width="4" height="8" fill="#d6ecc6"/><rect x="98" y="237" width="4" height="5" fill="#f0d8d6"/><rect x="305" y="498" width="10" height="5" fill="#f0d8d6"/><rect x="353" y="126" width="5" height="5" fill="#c9f2c9"/><rect x="461" y="64" width="8" height="7" fill="#cde6b8"/><rect x="722" y="113" width="7" height="4" fill="#f4f4c4"/><rect x="473" y="393" width="7" height="9" fill="#f4f4c4"/><rect x="591" y="213" width="4" height="3" fill="#d6ecc6"/><rect x="1307" y="388" width="6" height="4" fill="#f4f4c4"/><rect x="361" y="155" width="10" height="8" fill="#c9f2c9"/><rect x="125" y="56" width="3" height="9" fill="#aee0c8"/><rect x="566" y="252" width="7" height="10" fill="#f0d8d6"/><rect x="759" y="175" width="6" height="3" fill="#aee0c8"/><rect x="974" y="277" width="9" height="5" fill="#c9f2c9"/><rect x="1135" y="314" width="8" height="8" fill="#c9f2c9"/><rect x="845" y="279" width="10" height="9" fill="#cde6b8"/><rect x="429" y="8" width="8" height="4" fill="#f0d8d6"/><rect x="64" y="267" width="12" height="7" fill="#d6ecc6"/><rect x="508" y="277" width="9" height="8" fill="#f4f4c4"/><rect x="1017" y="148" width="9" height="5" fill="#c9f2c9"/><rect x="890" y="20" width="9" height="6" fill="#f0d8d6"/><rect x="1215" y="272" width="6" height="7" fill="#f0d8d6"/><rect x="363" y="459" width="12" height="5" fill="#f4f4c4"/><rect x="366" y="49" width="3" height="6" fill="#cde6b8"/><rect x="332" y="62" width="9" height="5" fill="#aee0c8"/><rect x="571" y="64" width="9" height="10" fill="#c9f2c9"/><rect x="402" y="351" width="10" height="9" fill="#f4f4c4"/><rect x="767" y="268" width="4" height="6" fill="#cde6b8"/><rect x="180" y="152" width="10" height="4" fill="#aee0c8"/><rect x="41" y="246" width="7" height="3" fill="#aee0c8"/><rect x="338" y="254" width="3" height="6" fill="#d6ecc6"/><rect x="98" y="178" width="12" height="10" fill="#aee0c8"/><rect x="1086" y="268" width="3" height="3" fill="#c9f2c9"/><rect x="1014" y="466" width="7" height="8" fill="#d6ecc6"/><rect x="641" y="318" width="3" height="8" fill="#cde6b8"/><rect x="308" y="493" width="7" height="9" fill="#d6ecc6"/><rect x="1283" y="275" width="6" height="7" fill="#d6ecc6"/><rect x="1165" y="408" width="6" height="7" fill="#f4f4c4"/><rect x="349" y="197" width="6" height="8" fill="#d6ecc6"/><rect x="191" y="287" width="9" height="4" fill="#f4f4c4"/><rect x="1102" y="288" width="6" height="9" fill="#f4f4c4"/><rect x="581" y="338" width="5" height="5" fill="#d6ecc6"/><rect x="111" y="354" width="9" height="5" fill="#cde6b8"/><rect x="425" y="0" width="5" height="10" fill="#f4f4c4"/><rect x="350" y="86" width="9" height="10" fill="#d6ecc6"/><rect x="25" y="264" width="5" height="5" fill="#f0d8d6"/><rect x="502" y="81" width="5" height="8" fill="#f4f4c4"/><rect x="218" y="232" width="5" height="9" fill="#f4f4c4"/><rect x="446" y="316" width="6" height="4" fill="#cde6b8"/><rect x="68" y="199" width="9" height="4" fill="#f0d8d6"/><rect x="297" y="59" width="9" height="10" fill="#d6ecc6"/><rect x="593" y="158" width="12" height="8" fill="#f4f4c4"/><rect x="313" y="314" width="5" height="10" fill="#c9f2c9"/><rect x="1361" y="356" width="12" height="5" fill="#f4f4c4"/><rect x="258" y="362" width="4" height="6" fill="#c9f2c9"/><rect x="1021" y="131" width="6" height="3" fill="#c9f2c9"/><rect x="913" y="496" width="7" height="9" fill="#f0d8d6"/><rect x="447" y="368" width="5" height="9" fill="#f0d8d6"/><rect x="796" y="346" width="4" height="6" fill="#f0d8d6"/><rect x="650" y="227" width="8" height="7" fill="#aee0c8"/><rect x="750" y="307" width="10" height="6" fill="#f4f4c4"/><rect x="636" y="61" width="7" height="6" fill="#aee0c8"/><rect x="1160" y="365" width="4" height="8" fill="#cde6b8"/><rect x="602" y="270" width="10" height="9" fill="#f4f4c4"/><rect x="177" y="372" width="4" height="5" fill="#d6ecc6"/><rect x="355" y="173" width="12" height="10" fill="#d6ecc6"/><rect x="281" y="96" width="11" height="10" fill="#c9f2c9"/><rect x="724" y="3" width="7" height="6" fill="#d6ecc6"/><rect x="513" y="457" width="6" height="5" fill="#f4f4c4"/><rect x="633" y="84" width="12" height="9" fill="#c9f2c9"/><rect x="1118" y="200" width="10" height="8" fill="#d6ecc6"/><rect x="516" y="93" width="9" height="5" fill="#aee0c8"/><rect x="1102" y="240" width="7" height="6" fill="#aee0c8"/><rect x="750" y="45" width="4" height="10" fill="#f0d8d6"/><rect x="996" y="462" width="9" height="9" fill="#f4f4c4"/><rect x="245" y="179" width="8" height="8" fill="#aee0c8"/><rect x="1285" y="447" width="11" height="5" fill="#c9f2c9"/><rect x="844" y="115" width="6" height="9" fill="#cde6b8"/><rect x="110" y="334" width="4" height="4" fill="#c9f2c9"/><rect x="156" y="194" width="6" height="5" fill="#c9f2c9"/><rect x="75" y="66" width="5" height="7" fill="#c9f2c9"/><rect x="1179" y="4" width="6" height="4" fill="#aee0c8"/><rect x="697" y="397" width="5" height="8" fill="#d6ecc6"/><rect x="1226" y="11" width="4" height="3" fill="#aee0c8"/><rect x="657" y="30" width="6" height="5" fill="#aee0c8"/><rect x="346" y="463" width="4" height="5" fill="#f4f4c4"/><rect x="1155" y="42" width="8" height="3" fill="#cde6b8"/><rect x="960" y="158" width="6" height="4" fill="#cde6b8"/><rect x="1173" y="437" width="5" height="10" fill="#d6ecc6"/><rect x="713" y="140" width="12" height="9" fill="#f0d8d6"/><rect x="1318" y="444" width="6" height="3" fill="#c9f2c9"/><rect x="1224" y="486" width="10" height="4" fill="#cde6b8"/><rect x="985" y="19" width="3" height="4" fill="#d6ecc6"/><rect x="1188" y="7" width="4" height="3" fill="#f4f4c4"/><rect x="173" y="34" width="3" height="9" fill="#aee0c8"/><rect x="1116" y="409" width="10" height="4" fill="#f0d8d6"/><rect x="839" y="214" width="7" height="7" fill="#aee0c8"/><rect x="1293" y="177" width="9" height="8" fill="#aee0c8"/><rect x="838" y="319" width="9" height="3" fill="#cde6b8"/><rect x="443" y="326" width="9" height="4" fill="#d6ecc6"/><rect x="775" y="373" width="4" height="4" fill="#d6ecc6"/><rect x="167" y="376" width="5" height="4" fill="#f0d8d6"/><rect x="1180" y="294" width="12" height="5" fill="#d6ecc6"/><rect x="339" y="417" width="10" height="7" fill="#f4f4c4"/><rect x="864" y="339" width="7" height="5" fill="#cde6b8"/><rect x="1361" y="260" width="4" height="8" fill="#f0d8d6"/><rect x="752" y="467" width="10" height="8" fill="#d6ecc6"/><rect x="717" y="434" width="11" height="3" fill="#f4f4c4"/><rect x="97" y="301" width="11" height="7" fill="#cde6b8"/><rect x="820" y="380" width="6" height="3" fill="#f0d8d6"/><rect x="260" y="181" width="11" height="3" fill="#cde6b8"/><rect x="277" y="255" width="5" height="4" fill="#c9f2c9"/><rect x="882" y="241" width="8" height="6" fill="#c9f2c9"/><rect x="481" y="337" width="5" height="5" fill="#c9f2c9"/><rect x="856" y="297" width="10" height="6" fill="#cde6b8"/><rect x="175" y="139" width="5" height="10" fill="#c9f2c9"/><rect x="301" y="311" width="10" height="7" fill="#aee0c8"/><rect x="25" y="182" width="10" height="6" fill="#c9f2c9"/><rect x="871" y="136" width="4" height="6" fill="#cde6b8"/><rect x="1184" y="303" width="8" height="4" fill="#d6ecc6"/><rect x="34" y="256" width="7" height="7" fill="#f0d8d6"/><rect x="427" y="253" width="11" height="8" fill="#cde6b8"/><rect x="1039" y="497" width="9" height="6" fill="#d6ecc6"/><rect x="823" y="184" width="6" height="4" fill="#f4f4c4"/><rect x="35" y="476" width="10" height="8" fill="#f4f4c4"/><rect x="398" y="281" width="10" height="7" fill="#d6ecc6"/><rect x="62" y="109" width="10" height="6" fill="#aee0c8"/><rect x="1280" y="360" width="5" height="7" fill="#f4f4c4"/><rect x="534" y="266" width="9" height="4" fill="#cde6b8"/><rect x="598" y="149" width="4" height="9" fill="#d6ecc6"/><rect x="464" y="244" width="5" height="7" fill="#f4f4c4"/><rect x="97" y="123" width="6" height="4" fill="#cde6b8"/><rect x="1111" y="165" width="7" height="7" fill="#aee0c8"/><rect x="1025" y="224" width="10" height="4" fill="#f0d8d6"/><rect x="675" y="441" width="9" height="5" fill="#cde6b8"/><rect x="721" y="107" width="8" height="7" fill="#f0d8d6"/><rect x="949" y="213" width="4" height="5" fill="#f4f4c4"/><rect x="618" y="432" width="7" height="3" fill="#c9f2c9"/><rect x="106" y="266" width="6" height="4" fill="#c9f2c9"/><rect x="438" y="325" width="11" height="8" fill="#f4f4c4"/><rect x="89" y="384" width="9" height="3" fill="#c9f2c9"/><rect x="578" y="202" width="10" height="8" fill="#f4f4c4"/><rect x="1254" y="268" width="5" height="6" fill="#c9f2c9"/><rect x="662" y="230" width="9" height="6" fill="#d6ecc6"/><rect x="946" y="79" width="12" height="4" fill="#cde6b8"/><rect x="718" y="261" width="11" height="5" fill="#d6ecc6"/><rect x="406" y="18" width="10" height="3" fill="#c9f2c9"/><rect x="219" y="144" width="9" height="5" fill="#c9f2c9"/><rect x="940" y="286" width="8" height="7" fill="#f0d8d6"/><rect x="47" y="299" width="4" height="7" fill="#c9f2c9"/><rect x="229" y="390" width="6" height="6" fill="#f4f4c4"/><rect x="633" y="356" width="11" height="10" fill="#c9f2c9"/><rect x="82" y="264" width="7" height="9" fill="#aee0c8"/><rect x="1255" y="361" width="9" height="3" fill="#aee0c8"/><rect x="486" y="404" width="6" height="7" fill="#d6ecc6"/></g>
<!-- ===== landuse ===== -->
<!-- pink -->
<g fill="#efdcdb">
<path d="M350 81 L408 81 L408 130 L350 130 Z"/>
<path d="M380 190 L420 163 L445 163 L470 180 L475 250 L396 250 Z"/>
<path d="M658 0 L700 0 L700 53 L658 53 Z"/>
<path d="M989 0 L1050 0 L1050 51 L989 51 Z"/>
<path d="M139 352 L232 352 L232 398 L139 398 Z"/>
<path d="M426 250 L521 250 L521 271 L426 271 Z"/>
<path d="M350 458 L392 458 L392 500 L350 500 Z"/>
<path d="M1146 448 L1172 448 L1172 470 L1146 470 Z"/>
</g>
<!-- purple industrial -->
<g fill="#e8dae5">
<path d="M857 278 L868 250 L984 178 L1068 125 L1123 97 L1193 51 L1193 106 L1156 113 L1150 130 L1180 192 L1175 204 L1119 204 L1068 203 L1040 217 L984 250 L929 275 L873 281 Z"/>
<path d="M1034 56 L1193 51 L1193 106 L1068 122 L1034 106 Z"/>
<path d="M66 400 L139 366 L197 403 L208 433 L162 437 L90 432 Z"/>
<path d="M396 412 L420 388 L500 348 L581 328 L605 340 L560 382 L470 410 L420 432 Z"/>
<path d="M1305 262 L1400 250 L1400 319 L1305 319 Z"/>
<path d="M1305 326 L1330 326 L1330 360 L1305 360 Z"/>
<path d="M350 156 L383 156 L383 189 L350 189 Z"/>
<path d="M1060 447 L1146 447 L1180 470 L1220 470 L1258 500 L1060 500 Z"/>
</g>
<g fill="#cfccb2">
<path d="M70 392 L104 372 L150 368 L188 372 L190 410 L150 418 L110 430 L72 425 Z"/>
<path d="M1251 250 L1312 250 L1312 299 L1251 299 Z"/>
</g>
<!-- beige farmland / allotments -->
<g fill="#e9edcf">
<path d="M830 310 L989 306 L989 352 L908 352 L839 357 L830 340 Z"/>
<path d="M955 366 L1036 366 L1036 412 L1001 407 L955 412 Z"/>
<path d="M1212 46 L1400 30 L1400 130 L1290 110 L1235 100 Z"/>
<path d="M1328 116 L1400 116 L1400 250 L1340 250 Z"/>
<path d="M1215 140 L1250 160 L1272 220 L1270 250 L1225 250 Z"/>
<path d="M0 380 L81 380 L81 500 L0 500 Z"/>
</g>
<path d="M850 312 L908 312 L908 338 L850 338 Z" fill="#f2dcbb"/>
<path d="M489 377 L605 377 L605 435 L489 435 Z" fill="#f6f6d6"/>
<!-- grass / parks -->
<g fill="#cbe5b6">
<path d="M378 0 L459 0 L455 60 L452 100 L454 150 L420 150 L408 130 L408 97 L378 97 Z"/>
<path d="M489 18 L547 18 L550 60 L535 88 L489 80 Z"/>
<path d="M449 51 L489 51 L489 93 L449 93 Z"/>
<path d="M530 100 L551 97 L560 70 L593 64 L595 90 L632 92 L632 132 L590 132 L580 162 L540 160 L528 130 Z"/>
<path d="M788 12 L816 12 L816 58 L788 58 Z"/>
<path d="M811 0 L853 0 L853 32 L811 32 Z"/>
<path d="M811 62 L839 62 L839 97 L811 97 Z"/>
<path d="M899 0 L932 0 L932 116 L899 116 Z"/>
<path d="M950 0 L989 0 L989 60 L950 60 Z"/>
<path d="M908 139 L978 139 L978 192 L908 192 Z"/>
<path d="M0 262 L53 262 L53 308 L0 308 Z"/>
<path d="M232 262 L350 262 L350 296 L232 296 Z"/>
<path d="M255 301 L350 301 L350 389 L255 389 Z"/>
<path d="M640 453 L697 450 L697 500 L640 500 Z"/>
<path d="M783 384 L850 384 L955 390 L955 412 L920 442 L867 442 L800 450 L783 444 Z"/>
<path d="M1258 301 L1291 301 L1291 322 L1258 322 Z"/>
<path d="M1346 285 L1400 285 L1400 500 L1330 500 L1330 430 L1346 412 Z"/>
<path d="M1050 331 L1096 331 L1096 417 L1050 417 Z"/>
<path d="M139 262 L220 262 L220 301 L139 301 Z"/>
<path d="M1290 90 L1340 110 L1330 160 L1300 150 Z"/>
<path d="M312 106 L360 106 L372 130 L417 130 L417 156 L312 156 Z"/>
<path d="M311 222 L352 222 L355 262 L311 262 Z"/>
</g>
<!-- forest -->
<g fill="#b3d29e">
<path d="M957 97 L1024 97 L1024 148 L957 148 Z"/>
<path d="M788 500 L827 477 L862 454 L867 442 L920 442 L955 412 L1001 407 L1024 417 L1048 414 L1035 442 L1015 470 L1002 500 Z"/>
<path d="M880 418 L940 412 L960 420 L945 440 L900 440 Z" fill="#b2ccae"/>
<path d="M524 458 L639 458 L639 500 L524 500 Z"/>
<path d="M755 470 L788 470 L788 500 L755 500 Z"/>
<path d="M0 430 L35 430 L35 480 L0 480 Z"/>
<path d="M150 265 L215 265 L215 300 L150 300 Z"/>
</g>
<g fill="#aacbaf">
<path d="M714 0 L779 0 L779 58 L714 58 Z"/>
<path d="M756 424 L783 424 L783 456 L756 456 Z"/>
</g>
<path d="M1254 51 L1305 51 L1305 79 L1254 79 Z" fill="#aad3df"/>

<g>
<path d="M0 0 L30 0 L30 14 L0 14 Z" fill="#efc9c4"/>
<path d="M20 0 L60 0 L60 14 L20 14 Z" fill="#e9edcf"/>
<path d="M130 0 L290 0 L290 14 L130 14 Z" fill="#e3e9cf"/>
<path d="M240 0 L275 0 L275 14 L240 14 Z" fill="#b9d3b0"/>
<path d="M300 0 L340 0 L340 14 L300 14 Z" fill="#cbe5b6"/>
</g>
<path d="M45 14 L80 6 L110 0" fill="none" stroke="#f3a890" stroke-width="8"/>
<path d="M95 2 L120 8 L130 14" fill="none" stroke="#f3a890" stroke-width="6"/>
<!-- ===== water ===== -->
<g fill="none" stroke="#aad3df" stroke-linecap="round" stroke-linejoin="round">
<path stroke-width="14.5" d="M-10 362 L0 370 C15 380 28 388 39 396 C55 410 65 420 76 427 C88 435 96 439 106 441 C125 445 145 447 162 447 L231 446 L301 446 L350 446 C380 442 400 440 419 435 C450 425 470 413 489 405 C515 395 535 390 554 384 C575 375 590 365 605 352 C625 335 640 315 658 302 C675 290 688 283 700 280 C725 277 745 278 769 280 C795 283 815 286 839 287 C865 287 885 287 908 285 C925 282 940 279 955 274 C972 268 985 264 1000 257 C1012 250 1020 244 1030 238 C1040 230 1050 223 1061 218 C1072 213 1084 211 1096 211 C1110 211 1122 214 1131 219"/>
<path stroke-width="12" d="M1131 219 C1140 224 1148 230 1154 236 C1162 246 1168 256 1177 264 C1188 270 1200 276 1212 277 C1225 278 1238 276 1247 271 C1258 264 1266 256 1270 246 C1274 235 1273 226 1272 218 C1270 205 1268 195 1265 185 C1260 172 1255 168 1247 160 C1238 150 1232 140 1226 130 C1218 118 1212 110 1207 100 C1200 88 1198 80 1198 69 C1198 55 1200 45 1207 37 C1215 25 1225 18 1235 14 C1250 7 1265 4 1281 3.5 C1310 3 1330 5 1351 9 C1370 13 1385 20 1400 30"/>
<path stroke-width="6" d="M862 272 L930 248 L1000 215"/>
<path stroke-width="5" d="M880 262 L945 236 L990 210"/>
<path stroke-width="4" d="M1037 217 L1057 156"/>
</g>

<!-- ===== rail yard ===== -->
<path d="M596 278 L598 308 L512 350 L443 384 L402 416 L390 390 L431 363 L500 318 L570 282 Z" fill="#aaa6a8"/>
<g fill="none" stroke="#7d7d7d" stroke-width="1.4">
<path d="M588 283 L508 325 L433 369 L396 395"/>
<path d="M591 289 L510 331 L436 375 L398 402"/>
<path d="M593 295 L512 337 L439 381 L400 409"/>
<path d="M595 302 L514 343 L442 386"/>
</g>

<!-- ===== secondary roads ===== -->
<defs><g id="rsec">
<path d="M489 0 L489 58 L480 76 L431 132 L392 79 L350 67"/>
<path d="M489 14 L547 18 L600 16 L628 0"/>
<path d="M609 16 L621 46 L635 88 L642 97"/>
<path d="M535 167 L582 183 L628 208 L700 232"/>
<path d="M651 116 L669 162 L686 192 L700 208"/>
<path d="M639 197 L663 192 L700 181"/>
<path d="M890 0 L874 23 L871 46 L844 97 L839 102"/>
<path d="M700 169 L735 185 L769 204 L779 232"/>
<path d="M0 338 L23 347 L58 380 L93 412"/>
<path d="M330 436 L350 431 L443 394 L512 366 L582 338 L651 285 L700 262"/>
<path d="M42 426 L116 454 L208 465 L278 463 L350 459 L443 447 L524 401 L593 370 L700 319"/>
<path d="M531 401 L526 447 L512 482 L489 500"/>
<path d="M700 373 L628 447 L582 500"/>
<path d="M536 166 L634 210"/>
<path d="M638 198 L687 194 L733 187 L779 210 L768 263"/>
<path d="M629 228 L657 268 L675 302 L687 319"/>
<path d="M548 282 L641 252 L733 228"/>
<path d="M559 319 L652 272"/>
<path d="M1064 134 L1119 167 L1170 208 L1152 250"/>
<path d="M1115 97 L1138 125 L1101 148"/>
<path d="M797 326 L839 357 L908 352 L955 343 L1050 338 L1119 315 L1147 308"/>
<path d="M1133 250 L1147 308 L1159 350 L1189 350 L1207 431 L1212 458 L1235 500"/>
<path d="M1050 296 L1119 292 L1166 294 L1212 310 L1247 310"/>
<path d="M1119 366 L1096 424 L1064 500"/>
<path d="M1108 363 L1159 350"/>
<path d="M23 366 L93 350 L127 348"/>
</g></defs>
<use href="#rsec" fill="none" stroke="#c3c58a" stroke-width="6" stroke-linecap="round" stroke-linejoin="round"/>
<use href="#rsec" fill="none" stroke="#f0f3b8" stroke-width="4.4" stroke-linecap="round" stroke-linejoin="round"/>
<!-- ===== primary roads ===== -->
<defs><g id="rpri">
<path d="M127 348 L350 343 L466 322 L540 287 L571 270 L605 250 L628 220 L632 185 L630 127 L646 93 L642 46 L632 0"/>
<path d="M317 25 L335 50 L350 78 L346 100 L350 162 L362 181 L389 201 L443 215 L512 225 L554 250 L582 262 L600 280 L600 319 L635 370 L582 435 L554 500"/>
<path d="M551 97 L528 120 L535 150 L530 185 L523 215 L545 245 L564 268 L601 291"/>
<path d="M560 64 L639 60 L700 57 L769 86 L804 116 L834 162 L860 203 L837 240 L768 265 L733 268"/>
<path d="M790 0 L774 58 L758 93 L753 139 L735 197 L733 250 L733 291 L749 326 L753 343 L751 458 L769 482 L797 500"/>
<path d="M816 174 L881 130 L908 137 L955 139 L966 144"/>
<path d="M700 236 L839 232"/>
<path d="M832 252 L955 185 L1050 134 L1119 97 L1194 51 L1258 0"/>
<path d="M606 402 L680 319 L733 291"/>
<path d="M768 286 L814 309 L890 300"/>
<path d="M776 308 L839 299 L908 302 L962 287 L1040 281 L1054 242 L1123 236 L1136 250 L1189 276 L1235 285 L1242 303 L1291 301 L1339 278 L1400 250"/>
<path d="M1064 401 L1096 431 L1143 447 L1189 442 L1247 433 L1270 417 L1300 357 L1291 301"/>
<path d="M1300 357 L1374 407 L1400 394"/>
</g></defs>
<use href="#rpri" fill="none" stroke="#d3a46a" stroke-width="6.8" stroke-linecap="round" stroke-linejoin="round"/>
<use href="#rpri" fill="none" stroke="#f8cf9c" stroke-width="5" stroke-linecap="round" stroke-linejoin="round"/>
<!-- trunk -->
<defs><g id="rtru">
<path d="M21 500 L58 440 L93 394 L130 347"/>
<path d="M535 0 L549 18 L554 46 L551 69 L551 97"/>
</g></defs>
<use href="#rtru" fill="none" stroke="#d98a72" stroke-width="7" stroke-linecap="round" stroke-linejoin="round"/>
<use href="#rtru" fill="none" stroke="#f7b19a" stroke-width="5.4" stroke-linecap="round" stroke-linejoin="round"/>

<!-- ===== railways ===== -->
<defs><g id="rail"><path d="M0 311 L116 304 L232 296 L301 296 L336 303 L350 313 L419 370 L438 380"/><path d="M0 318 L35 319 L93 347 L139 380 L197 399 L350 399 L396 400"/><path d="M454 0 L438 53 L417 109 L415 130 L424 153 L454 176 L470 197 L475 250 L475 296 L489 326 L512 354 L547 401 L582 414 L616 412 L651 394 L700 370 L746 343 L816 315 L978 306 L1050 331 L1108 363 L1166 352 L1258 329 L1305 322 L1351 324 L1386 343 L1400 359"/><path d="M364 0 L364 23 L385 42 L394 69 L389 81 L350 76"/><path d="M350 192 L385 171 L419 160 L443 162 L466 181"/><path d="M473 197 L512 220 L554 250 L606 286 L634 402"/><path d="M396 400 L396 447 L419 500"/><path d="M547 401 L593 417 L628 458 L632 500"/><path d="M635 370 L637 500"/><path d="M686 389 L679 500"/><path d="M629 402 L745 333 L860 300 L890 291"/></g><g id="railm"><path d="M844 245 L920 197 L1050 120 L1194 46 L1258 0"/><path d="M915 7 L948 35 L962 58 L989 65 L1050 53"/><path d="M1300 324 L1351 296 L1400 262"/></g></defs>
<use href="#rail" fill="none" stroke="#747474" stroke-width="2.8" stroke-linejoin="round"/>
<use href="#rail" fill="none" stroke="#e8e8e8" stroke-width="1" stroke-dasharray="5 5"/>
<use href="#railm" fill="none" stroke="#7a7a7a" stroke-width="7" stroke-linejoin="round"/>
<use href="#railm" fill="none" stroke="#d8d8d8" stroke-width="1.2" stroke-dasharray="6 5"/>


<!-- ===== motorways ===== -->

<defs><g id="rmw">
<path d="M313 40 L350 28 L385 28 L438 39 L512 53 L551 60"/>
<path d="M231 264 L255 303 L301 370 L319 424 L329 500"/>
<path d="M313 205 L350 204 L373 199 L396 204 L447 218"/>
<path d="M830 -3 L862 0 L908 7 L932 23 L943 58 L945 93 L955 116 L973 148 L996 197 L1017 250 L1033 296 L1040 366 L1033 435 L1019 500"/>
</g></defs>
<use href="#rmw" fill="none" stroke="#d0647c" stroke-width="7" stroke-linecap="round" stroke-linejoin="round"/>
<use href="#rmw" fill="none" stroke="#e892a2" stroke-width="5.4" stroke-linecap="round" stroke-linejoin="round"/>

<!-- ===== labels ===== -->
<g font-family="'Liberation Sans',sans-serif" fill="#333" text-anchor="middle" stroke="#fff" stroke-width="2.5" paint-order="stroke" stroke-linejoin="round" font-size="13" letter-spacing="0.3">
<text x="363" y="63">Hausen</text>
<text x="490" y="142">Bockenheim</text>
<text x="675" y="127">Nordend West</text>
<text x="866" y="84">Bornheim</text>
<text x="1007" y="92">Riederwald</text>
<text x="1208" y="145">Fechenheim</text>
<text x="1293" y="193">Bürgel</text>
<text x="1345" y="67" text-anchor="start">Rumpenh</text>
<text x="584" y="216">Westend Süd</text>
<text x="708" y="222">Innenstadt</text>
<text x="699" y="247" font-size="16.5">Frankfurt am</text>
<text x="699" y="267" font-size="16.5">Main</text>
<text x="803" y="242">Ostend</text>
<text x="472" y="319">Gallus</text>
<text x="574" y="338">Gutleutviertel</text>
<text x="708" y="352">Sachsenhausen</text>
<text x="937" y="356">Oberrad</text>
<text x="1160" y="295" font-size="14.5">Offenbach</text>
<text x="1160" y="314" font-size="14.5">am Main</text>
<text x="60" y="347">Nied</text>
<text x="267" y="432">Griesheim</text>
<text x="470" y="460">Niederrad</text>
<text x="126" y="487">Schwanheim</text>
</g>
<g font-family="'Liberation Sans',sans-serif" font-style="italic" fill="#b0303b" text-anchor="middle" stroke="#fff" stroke-width="2" paint-order="stroke" stroke-linejoin="round" font-size="10.5">
<text x="561" y="58">Frankfurt-Miquelallee</text><text x="561" y="70">21</text>
<text x="962" y="130">Frankfurt-Ost</text><text x="962" y="142">14</text>
<text x="999" y="216">Frankfurt-Ost</text><text x="999" y="228">14</text>
<text x="1016" y="257">Offenbach-Kaiserlei</text><text x="1016" y="269">15</text>
<text x="1032" y="324">Offenbach-Kaiserlei</text><text x="1032" y="336">15</text>
<text x="1040" y="377">Offenbach-Taunusring</text><text x="1040" y="389">16</text>
<text x="1040" y="403">Offenbach-Taunusring</text><text x="1040" y="415">16</text>
<text x="435" y="213">Katharinenkreisel</text><text x="435" y="225">5</text>
<text x="332" y="212">Frankfurt</text>
<text x="319" y="408">Frankfurt-Westhafen</text><text x="319" y="421">20</text>
<text x="330" y="487">Frankfurt-Niederrad</text><text x="330" y="499">21</text>
<text x="99" y="388">Nied</text><text x="88" y="403">Nied</text>
<text x="52" y="447">Schwanheim</text>
<text x="236" y="274">19</text>
<text x="178" y="4">Nordwestkreuz Frankfurt</text><text x="179" y="14">18</text>
</g>
<g font-family="'Liberation Sans',sans-serif" font-style="italic" fill="#8a4a8a" text-anchor="middle" stroke="#fff" stroke-width="2" paint-order="stroke" font-size="10.5">
<text x="152" y="409">Frankfurt</text><text x="152" y="421">Westside</text>
<text x="939" y="240">Osthafen</text>
</g>
<g font-family="'Liberation Sans',sans-serif" font-style="italic" fill="#5a8bb8" text-anchor="middle" font-size="10.5">
<text x="168" y="450" transform="rotate(-8 168 450)">Main</text>
<text x="508" y="398" transform="rotate(-18 508 398)">Main</text>
<text x="930" y="288" transform="rotate(-22 930 288)">Main</text>
<text x="1194" y="276" transform="rotate(20 1194 276)">Main</text>
<text x="731" y="283" transform="rotate(5 731 283)">Müllermain</text>
</g>
<g font-family="'Liberation Sans',sans-serif" font-style="italic" fill="#4b6b50" text-anchor="middle" font-size="10.5" stroke="#fff" stroke-width="1.5" paint-order="stroke">
<text x="744" y="11">Hauptfriedhof</text>
<text x="907" y="498" font-size="13">Frankfurter</text>
</g>
<!-- shields -->
<g font-family="'Liberation Sans',sans-serif" font-size="10.5" text-anchor="middle" fill="#333">
<rect x="435" y="35" width="33" height="16" rx="3" fill="#f5dde2" stroke="#c9a9b0" stroke-width="1"/><text x="452" y="47">A 66</text>
<rect x="759" y="61" width="26" height="16" rx="3" fill="#f7e4cd" stroke="#c9ae8c"/><text x="772" y="73">B 3</text>
<rect x="1127" y="227" width="42" height="16" rx="3" fill="#f7f8dc" stroke="#b8b98e"/><text x="1148" y="239">L 3001</text>
<rect x="1291" y="233" width="38" height="16" rx="3" fill="#f2f2f2" stroke="#b0b0b0"/><text x="1310" y="245">K 192</text>
<rect x="167" y="341" width="38" height="16" rx="3" fill="#f7e4cd" stroke="#c9ae8c"/><text x="186" y="353">K 803</text>
<rect x="427" y="392" width="38" height="16" rx="3" fill="#f7f8dc" stroke="#b8b98e"/><text x="446" y="404">K 818</text>
<rect x="539" y="449" width="38" height="16" rx="3" fill="#f2f2f2" stroke="#b0b0b0"/><text x="558" y="461">K 816</text>
<rect x="1185" y="432" width="33" height="16" rx="3" fill="#f7e4cd" stroke="#c9ae8c"/><text x="1202" y="444">B 43</text>
<rect x="1003" y="456" width="41" height="16" rx="3" fill="#f5dde2" stroke="#c9a9b0"/><text x="1024" y="468">A 661</text>
<rect x="793" y="491" width="26" height="16" rx="3" fill="#f7e4cd" stroke="#c9ae8c"/><text x="806" y="503">B 3</text>
<rect x="3" y="491" width="30" height="16" rx="3" fill="#f7e4cd" stroke="#c9ae8c"/><text x="18" y="503">B 40</text>
</g>

</svg><!--/MAP-->
</div>

<!-- nav panel -->
<div id="nav" class="abs" style="left:372px;top:110px;width:300px;height:251px;border-radius:10px;background:#262626;overflow:hidden">
  <svg class="abs" style="left:16px;top:15px" width="18" height="18" viewBox="0 0 24 24"><polygon points="3 11 22 2 13 21 11 13 3 11" fill="none" stroke="#0a84ff" stroke-width="2" stroke-linejoin="round"/></svg>
  <div class="abs" style="left:45px;top:17px;font-size:13px;font-weight:bold;color:#eee">Navigation</div>
  <div class="abs" style="left:0;top:49px;width:300px;height:1px;background:#383838"></div>
  <div class="abs" style="left:13px;top:58px;width:89px;height:32px;border-radius:6px;background:#0a84ff"></div>
  <div class="abs" style="left:0;top:98px;width:300px;height:1px;background:#383838"></div>
  <svg class="abs" style="left:48px;top:65px" width="17" height="17" viewBox="0 0 24 24" fill="none" stroke="#fff" stroke-width="2" stroke-linecap="round" stroke-linejoin="round"><path d="M19 17h2c.6 0 1-.4 1-1v-3c0-.9-.7-1.7-1.5-1.9C18.7 10.6 16 10 16 10s-1.3-1.4-2.2-2.3c-.5-.4-1.1-.7-1.8-.7H5c-.6 0-1.1.4-1.4.9l-1.4 2.9A3.7 3.7 0 0 0 2 12v4c0 .6.4 1 1 1h2"/><circle cx="7" cy="17" r="2"/><path d="M9 17h6"/><circle cx="17" cy="17" r="2"/></svg>
  <svg class="abs" style="left:142px;top:66px" width="16" height="16" viewBox="0 0 24 24" fill="none" stroke="#a8a8a8" stroke-width="2.2" stroke-linecap="round" stroke-linejoin="round"><circle cx="12" cy="3.5" r="2"/><path d="M6 7l3 5h6l3-5"/><path d="M9 12l-1 9M15 12l1 9M9.5 17h5M12 13v4"/></svg>
  <svg class="abs" style="left:234px;top:66px" width="16" height="16" viewBox="0 0 24 24" fill="none" stroke="#a8a8a8" stroke-width="2.2" stroke-linecap="round" stroke-linejoin="round"><circle cx="18.5" cy="17.5" r="3.5"/><circle cx="5.5" cy="17.5" r="3.5"/><circle cx="15" cy="5" r="1"/><path d="M12 17.5V14l-3-3 4-3 2 3h2"/></svg>
  <div class="abs" style="left:12px;top:122px;width:14px;height:14px;border-radius:50%;background:#22c55e;box-shadow:0 0 0 2px rgba(34,197,94,0.3)"></div>
  <div class="abs" style="left:33px;top:111px;width:254px;height:36px;border:1px solid #3a3a3a;border-radius:7px;background:#1c1c1c;color:#7a7a7a;font-size:14px;line-height:34px;padding-left:12px">Start point</div>
  <div class="abs" style="left:12px;top:166px;width:14px;height:14px;border-radius:50%;background:#ef4444;box-shadow:0 0 0 2px rgba(239,68,68,0.3)"></div>
  <div class="abs" style="left:33px;top:155px;width:254px;height:36px;border:1px solid #3a3a3a;border-radius:7px;background:#1c1c1c;color:#7a7a7a;font-size:14px;line-height:34px;padding-left:12px">End point</div>
  <div class="abs" style="left:13px;top:203px;width:133px;height:35px;border-radius:6px;background:#135496;color:#8aa3bf;font-size:13px;text-align:center;line-height:35px">Get Route</div>
  <div class="abs" style="left:154px;top:203px;width:133px;height:35px;border-radius:6px;background:#3a3a3a;color:#e0e0e0;font-size:13px;text-align:center;line-height:35px">Clear</div>
  <svg class="abs" style="left:261px;top:121px" width="16" height="16" viewBox="0 0 24 24" fill="none" stroke="#9a9a9a" stroke-width="2" stroke-linecap="round" stroke-linejoin="round"><path d="M20 10c0 6-8 12-8 12s-8-6-8-12a8 8 0 0 1 16 0Z"/><circle cx="12" cy="10" r="3"/></svg>
  <svg class="abs" style="left:261px;top:165px" width="16" height="16" viewBox="0 0 24 24" fill="none" stroke="#9a9a9a" stroke-width="2" stroke-linecap="round" stroke-linejoin="round"><path d="M20 10c0 6-8 12-8 12s-8-6-8-12a8 8 0 0 1 16 0Z"/><circle cx="12" cy="10" r="3"/></svg>
</div>

<!-- map search -->
<div class="abs" style="left:1468px;top:110px;width:280px;height:38px;border-radius:8px;background:#272727">
  <svg class="abs" style="left:12px;top:12px" width="14" height="14" viewBox="0 0 24 24"><circle cx="11" cy="11" r="8" fill="none" stroke="#9a9a9a" stroke-width="2.2"/><path d="M21 21l-4.3-4.3" stroke="#9a9a9a" stroke-width="2.2" stroke-linecap="round"/></svg>
  <div class="abs" style="left:37px;top:12px;font-size:13px;color:#8a8a8a">Search address...</div>
</div>
<!-- zoom -->
<div class="abs" style="left:1702px;top:500px;width:46px;height:86px;border-radius:8px;background:#2c2c2c">
  <div class="abs" style="left:16px;top:22px;width:14px;height:1.5px;background:#eee"></div>
  <div class="abs" style="left:22.25px;top:16px;width:1.5px;height:14px;background:#eee"></div>
  <div class="abs" style="left:16px;top:62px;width:14px;height:1.5px;background:#eee"></div>
</div>

<div class="abs" style="left:360px;top:622px;font-size:12.5px;color:#777;white-space:nowrap"><b style="color:#888">Traffic:</b> To enable live traffic, set the <span style="font-family:'Liberation Mono',monospace">trafficApiKey</span> property with your HERE API key (free tier: 250k requests/month at <u>developer.here.com</u>).</div>

<div class="h" style="top:663px;font-size:18px;line-height:18px;letter-spacing:0.27px">Quick Navigation</div>
<div class="qbtn" style="left:360px">Paris</div>
<div class="qbtn" style="left:516px">London</div>
<div class="qbtn" style="left:673px">New York</div>
<div class="qbtn" style="left:829px">Tokyo</div>
<div class="qbtn" style="left:986px">Sydney</div>
<div class="qbtn" style="left:1142px">Rio</div>

<div class="h" style="top:760px;font-size:18px;line-height:18px;letter-spacing:0.35px">Controls</div>
<div class="cbtn" style="left:360px;width:137px">Clear All Features</div>
<div class="cbtn" style="left:509px;width:118px">Fit to Features</div>
<div class="cbtn" style="left:639px;width:155px">Download GeoJSON</div>
<div class="cbtn" style="left:806px;width:142px">Load Sample Data</div>

<div class="h" style="top:851px;font-size:18px;line-height:18px">Event Log</div>
<div id="log">
  <div class="abs" style="left:16px;right:16px;top:38px;height:1px;background:#2e2e2e"></div>
  <div class="logl" style="top:21px"><b>ready</b>: Map initialized successfully</div>
  <div class="logl" style="top:44px"><b>init</b>: Waiting for map...</div>
</div>

<div id="bottom">
  <div class="abs" style="left:-1px;top:0;width:1px;height:100px;background:#1e1e1e"></div>
  <div class="abs" style="left:372px;top:0;width:1px;height:100px;background:#1e1e1e"></div>
  <div class="abs" style="left:745px;top:0;width:1px;height:100px;background:#1e1e1e"></div>
  <div class="abs" style="left:1119px;top:0;width:1px;height:100px;background:#1e1e1e"></div>
  <div class="abs" style="left:0;top:54px;width:1119px;height:1px;background:#1e1e1e"></div>
  <!-- row 1 -->
  <div class="lbl" style="left:6px;top:6px">Center (Array)</div>
  <div class="inp" style="left:6px;top:23px;width:360px;height:24px;text-align:center">Edit Array</div>
  <div class="lbl" style="left:379px;top:6px">Zoom (Number)</div>
  <div class="inp" style="left:379px;top:23px;width:360px;height:22px;line-height:22px;padding-left:10px">12</div>
  <div class="lbl" style="left:752px;top:6px">MapStyle (String)</div>
  <div class="inp" style="left:752px;top:23px;width:360px;height:22px;line-height:22px;padding-left:7px">osm</div>
  <!-- row 2 -->
  <div class="lbl" style="left:6px;top:61px">ActiveTool (String)</div>
  <div class="inp" style="left:6px;top:77px;width:360px;height:23px;line-height:22px;padding-left:8px">static</div>
  <div class="lbl" style="left:379px;top:61px">GeoJson (Object)</div>
  <div class="inp" style="left:379px;top:78px;width:360px;height:24px;text-align:center">Edit Object</div>
  <div class="abs" style="left:746px;top:55px;width:373px;height:45px;background:#101010"></div>
  <div class="lbl" style="left:752px;top:61px">ShowToolbar (Boolean)</div>
  <div class="abs" style="left:756.5px;top:80px;width:15px;height:15px;border-radius:2px;background:#fff;box-shadow:0 0 0 0.5px #999"></div>
  <!-- theme / viewport / share -->
  <div class="abs" style="left:1120px;top:0;width:600px;height:23px;background:#0e1014;border-bottom:1px solid #1c1c1c"></div>
  <div class="abs" style="left:1269px;top:0;width:1px;height:100px;background:#1e1e1e"></div>
  <div class="abs" style="left:1619px;top:0;width:1px;height:100px;background:#1e1e1e"></div>
  <div class="sechead" style="left:1128px;top:5px">THEME</div>
  <div class="sechead" style="left:1278px;top:5px">VIEWPORT</div>
  <div class="sechead" style="left:1628px;top:5px">SHARE</div>
  <!-- view buttons -->
  <div class="vbtn sel" style="left:1120px;width:75px"><span>Dark</span><svg class="abs" style="left:29px;top:39px" width="16" height="16" viewBox="0 0 16 16"><path d="M5.5 1.2 A7 7 0 1 1 4.2 14.6 A5.6 6.3 0 0 0 5.5 1.2 Z" fill="#3b82f6"/></svg></div>
  <div class="vbtn" style="left:1195px;width:74px"><span>Bright</span><svg class="abs" style="left:29px;top:38px" width="16" height="16" viewBox="0 0 16 16"><g stroke="#a8a8a8" stroke-width="1.2"><path d="M8 0.5v3M8 12.5v3M0.5 8h3M12.5 8h3M2.9 2.9l1.2 1.2M11.9 11.9l1.2 1.2M2.9 13.1l1.2-1.2M11.9 4.1l1.2-1.2"/></g><circle cx="8" cy="8" r="2" fill="#a8a8a8"/></svg></div>
  <div class="vbtn" style="left:1270px;width:70px"><span>Phone</span><svg class="abs" style="left:29px;top:39px" width="12" height="16" viewBox="0 0 12 16"><rect x="1.5" y="0.8" width="9.4" height="14.4" rx="1" fill="none" stroke="#a8a8a8" stroke-width="1.1"/><path d="M1.5 3h9.4M1.5 13h9.4" stroke="#a8a8a8" stroke-width="1"/></svg></div>
  <div class="vbtn" style="left:1340px;width:70px"><span>Phablet</span><svg class="abs" style="left:29px;top:39px" width="12" height="16" viewBox="0 0 12 16"><rect x="1.5" y="0.8" width="9.4" height="14.4" rx="1" fill="none" stroke="#a8a8a8" stroke-width="1.1"/><path d="M1.5 3h9.4M1.5 13h9.4" stroke="#a8a8a8" stroke-width="1"/></svg></div>
  <div class="vbtn" style="left:1410px;width:69px"><span>Tablet</span><svg class="abs" style="left:26px;top:39px" width="18" height="12" viewBox="0 0 18 12"><rect x="0.8" y="1" width="15.4" height="9.6" rx="1" fill="none" stroke="#a8a8a8" stroke-width="1.1"/><path d="M3 1v9.6M14 1v9.6" stroke="#a8a8a8" stroke-width="1"/></svg></div>
  <div class="vbtn sel" style="left:1479px;width:70px"><span>Desktop</span><svg class="abs" style="left:27px;top:39px" width="16" height="14" viewBox="0 0 16 14"><rect x="0.8" y="0.6" width="14.6" height="10" rx="1.2" fill="#3b82f6"/><path d="M6.5 10.5h3v1.5h-3z" fill="#3b82f6"/><path d="M4.5 12h7v1h-7z" fill="#3b82f6"/></svg></div>
  <div class="vbtn" style="left:1549px;width:70px"><span>Native</span><svg class="abs" style="left:28px;top:39px" width="14" height="14" viewBox="0 0 14 14"><path d="M1 4V1h3M10 1h3v3M13 10v3h-3M4 13H1v-3" fill="none" stroke="#a8a8a8" stroke-width="1.2"/></svg></div>
  <div class="vbtn" style="left:1621px;width:99px"><span>Record</span><svg class="abs" style="left:42px;top:39px" width="16" height="14" viewBox="0 0 16 14"><rect x="1" y="1.5" width="10" height="10" rx="1.2" fill="none" stroke="#a8a8a8" stroke-width="1.2"/><path d="M11 5.5l3-2.5v7.5l-3-2.5z" fill="#a8a8a8"/></svg></div>
</div>
</body></html>
